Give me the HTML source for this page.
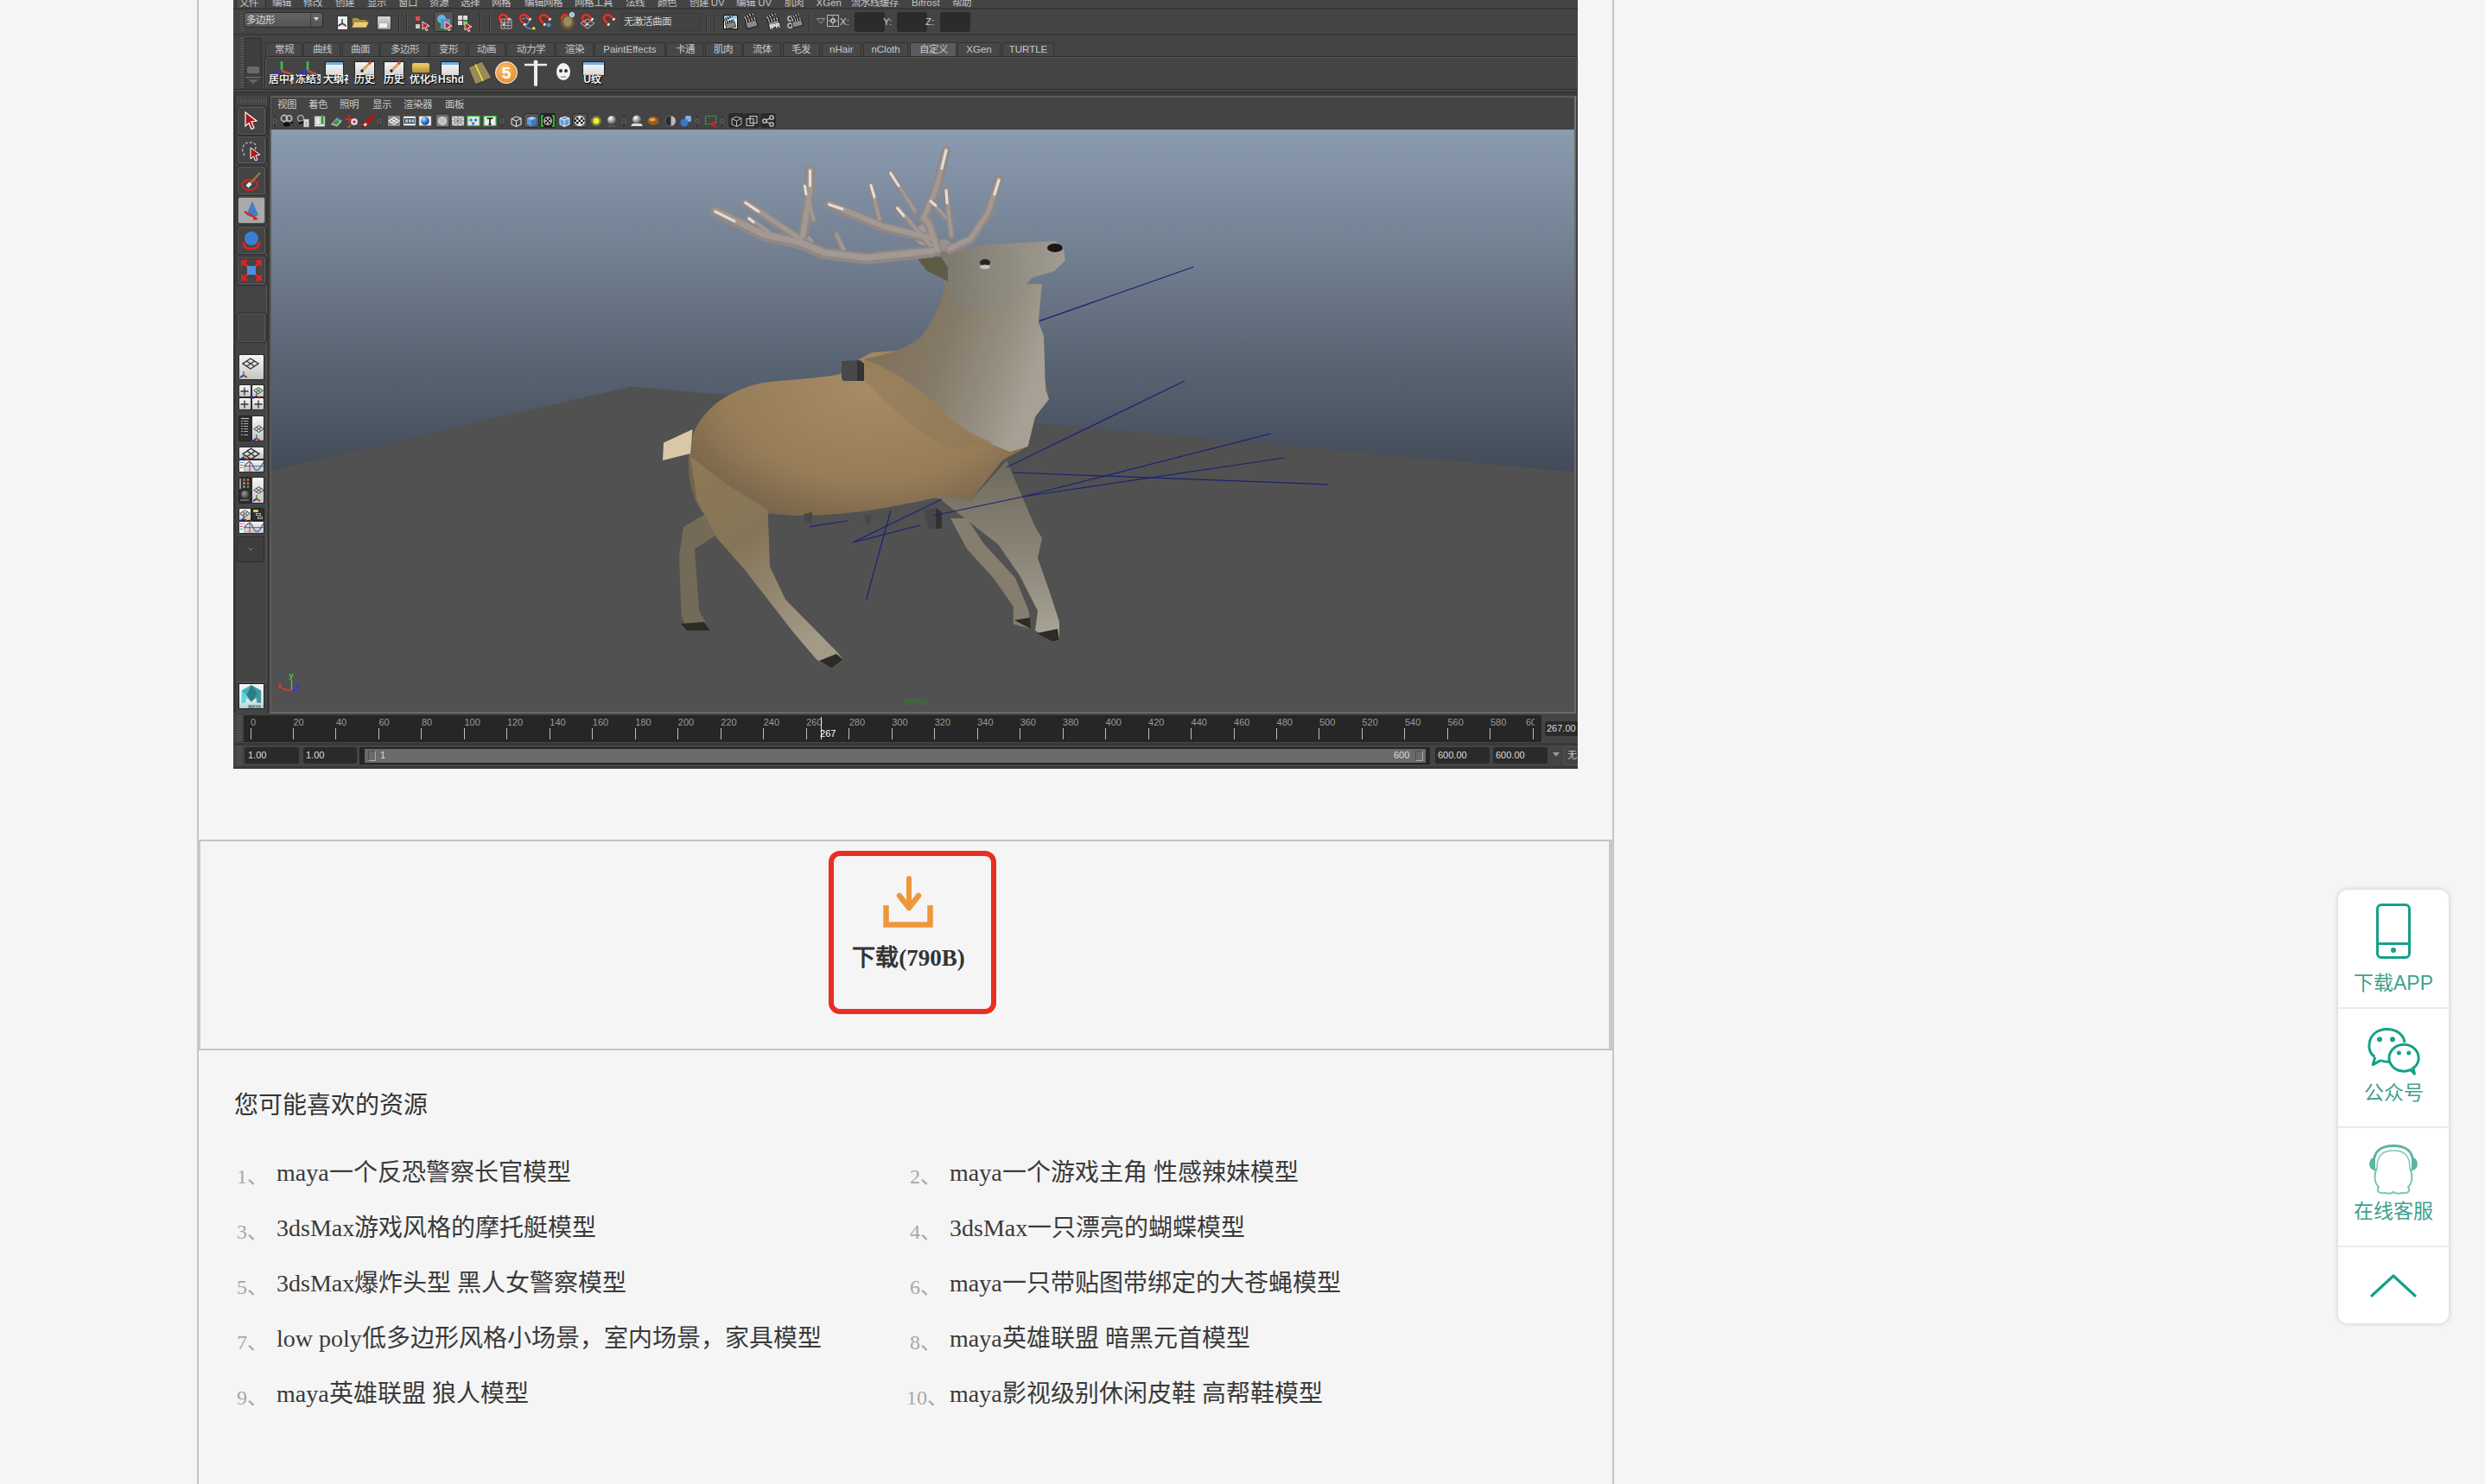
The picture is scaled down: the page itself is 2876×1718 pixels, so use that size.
<!DOCTYPE html>
<html lang="zh-CN"><head><meta charset="utf-8">
<style>
html,body{margin:0;padding:0;width:2876px;height:1718px;overflow:hidden;background:#f5f5f5;font-family:"Liberation Serif",serif;}
.a{position:absolute;}
#vl{left:228px;top:0;width:2px;height:1718px;background:#c6c6c6;}
#vr{left:1866px;top:0;width:2px;height:1718px;background:#c6c6c6;}
#dl{left:228px;top:972px;width:1640px;height:2px;background:#c4c4c4;}
#dlb{left:228px;top:1214px;width:1640px;height:2px;background:#c4c4c4;}
#dbox{left:230px;top:974px;width:1636px;height:240px;border-left:2px solid #c8c8c8;border-right:4px solid #c8c8c8;box-sizing:border-box;}
#red{left:959px;top:985px;width:194px;height:189px;border:6px solid #ea2f22;border-radius:13px;box-sizing:border-box;}
#dltxt{left:939px;top:1093px;width:225px;text-align:center;font-size:27px;font-weight:bold;color:#333;line-height:32px;white-space:nowrap;}
#maya{left:270px;top:0;width:1556px;height:890px;background:#444;overflow:hidden;}
h3{margin:0;}
.mt{position:absolute;font-family:"Liberation Sans",sans-serif;font-size:11.5px;line-height:13px;white-space:nowrap;}
.hd{left:271px;top:1262px;font-size:28px;color:#333;line-height:36px;white-space:nowrap;}
.li{font-size:28px;color:#3a3a3a;line-height:36px;white-space:nowrap;}
.nm{font-size:24px;color:#a8a8a8;line-height:36px;white-space:nowrap;}
#side{left:2706px;top:1030px;width:128px;height:502px;background:#fff;border-radius:11px;box-shadow:0 0 6px rgba(0,0,0,0.18);font-family:"Liberation Sans",sans-serif;color:#3f9e8a;}
.sdiv{position:absolute;left:0;width:128px;height:2px;background:#ebebeb;}
.stx{position:absolute;left:0;width:128px;text-align:center;font-size:23px;line-height:26px;color:#41a08c;}
</style></head><body>
<div class="a" id="vl"></div>
<div class="a" id="vr"></div>

<div class="a" id="maya">
<div style="position:absolute;left:0px;top:0px;width:1556px;height:10px;background:#444"></div>
<div style="position:absolute;left:3px;top:-2px;width:33px;height:11px;background:#4b4b4b;border:1px solid #2f2f2f;border-radius:2px"></div>
<div class="mt" style="left:7px;top:-3.5px;color:#c4c4c4">文件</div>
<div class="mt" style="left:44.7px;top:-3.5px;color:#c4c4c4">编辑</div>
<div class="mt" style="left:81px;top:-3.5px;color:#c4c4c4">修改</div>
<div class="mt" style="left:118px;top:-3.5px;color:#c4c4c4">创建</div>
<div class="mt" style="left:154.5px;top:-3.5px;color:#c4c4c4">显示</div>
<div class="mt" style="left:191px;top:-3.5px;color:#c4c4c4">窗口</div>
<div class="mt" style="left:227px;top:-3.5px;color:#c4c4c4">资源</div>
<div class="mt" style="left:263px;top:-3.5px;color:#c4c4c4">选择</div>
<div class="mt" style="left:299px;top:-3.5px;color:#c4c4c4">网格</div>
<div class="mt" style="left:337px;top:-3.5px;color:#c4c4c4">编辑网格</div>
<div class="mt" style="left:395px;top:-3.5px;color:#c4c4c4">网格工具</div>
<div class="mt" style="left:454px;top:-3.5px;color:#c4c4c4">法线</div>
<div class="mt" style="left:491px;top:-3.5px;color:#c4c4c4">颜色</div>
<div class="mt" style="left:527.5px;top:-3.5px;color:#c4c4c4">创建 UV</div>
<div class="mt" style="left:582px;top:-3.5px;color:#c4c4c4">编辑 UV</div>
<div class="mt" style="left:638px;top:-3.5px;color:#c4c4c4">肌肉</div>
<div class="mt" style="left:674.6px;top:-3.5px;color:#c4c4c4">XGen</div>
<div class="mt" style="left:715px;top:-3.5px;color:#c4c4c4">流水线缓存</div>
<div class="mt" style="left:785px;top:-3.5px;color:#c4c4c4">Bifrost</div>
<div class="mt" style="left:831.5px;top:-3.5px;color:#c4c4c4">帮助</div>
<div style="position:absolute;left:0px;top:9px;width:1556px;height:2px;background:#363636"></div>
<div style="position:absolute;left:0px;top:11px;width:1556px;height:28px;background:#444"></div>
<div style="position:absolute;left:8px;top:14px;width:5px;height:24px;background:repeating-linear-gradient(#5a5a5a 0 1px,transparent 1px 3px)"></div>
<div style="position:absolute;left:11.8px;top:13.6px;width:92px;height:18px;box-sizing:border-box;background:linear-gradient(#646464,#545454);border:1px solid #2c2c2c;border-radius:4px"></div>
<div style="position:absolute;left:89px;top:14.5px;width:1px;height:16px;background:#3a3a3a"></div>
<div style="position:absolute;left:93px;top:20px;width:0;height:0;border-left:3.5px solid transparent;border-right:3.5px solid transparent;border-top:4px solid #e0e0e0"></div>
<div class="mt" style="left:15.4px;top:17px;color:#dcdcdc">多边形</div>
<div style="position:absolute;left:120px;top:17.5px;width:11px;height:15px;background:#eee;border:1px solid #333"></div>
<svg style="position:absolute;left:120px;top:21px" width="12" height="11"><path d="M6 1V6 M6 6 L1.5 9 M6 6 L10.5 9" stroke="#22a" stroke-width="1.6"/><path d="M6 1V6" stroke="#2a2" stroke-width="1.6"/><path d="M6 6 L10.5 9" stroke="#d22" stroke-width="1.6"/></svg>
<svg style="position:absolute;left:136px;top:18px" width="22" height="16"><path d="M2 3 H8 L10 5 H18 V14 H2Z" fill="#b8923a"/><path d="M1 14 L4 7 H21 L18 14Z" fill="#e8cc78" stroke="#6a5420" stroke-width="0.7"/></svg>
<div style="position:absolute;left:166px;top:18px;width:15px;height:15px;background:linear-gradient(#d8d8d8,#9a9a9a);border-radius:2px;border:1px solid #333"></div>
<div style="position:absolute;left:169px;top:27px;width:9px;height:5px;background:#f0f0f0"></div>
<div style="position:absolute;left:191px;top:15px;width:1px;height:22px;background:#2e2e2e;box-shadow:1px 0 0 #555"></div>
<div style="position:absolute;left:200px;top:15px;width:1px;height:22px;background:#2e2e2e;box-shadow:1px 0 0 #555"></div>
<div style="position:absolute;left:211px;top:19px;width:5px;height:5px;background:#e24a4a"></div>
<div style="position:absolute;left:211px;top:28px;width:5px;height:5px;background:#ccc"></div>
<svg style="position:absolute;left:218px;top:24px" width="10" height="12"><path d="M1 1 L9 6 L5 7 L7 11 L5 11.5 L3.5 8 L1 10Z" fill="#c22" stroke="#fff" stroke-width="0.8"/></svg>
<div style="position:absolute;left:232px;top:13px;width:23px;height:24px;background:#555;border:1px solid #2e2e2e;border-radius:3px;box-sizing:border-box"></div>
<div style="position:absolute;left:236px;top:17px;width:10px;height:10px;background:#6ab0e0;border-radius:50%"></div>
<div style="position:absolute;left:240px;top:22px;width:11px;height:11px;background:#5590d8;border:1.5px solid #3c3;box-sizing:border-box"></div>
<svg style="position:absolute;left:244px;top:24px" width="10" height="12"><path d="M1 1 L9 6 L5 7 L7 11 L5 11.5 L3.5 8 L1 10Z" fill="#c22" stroke="#fff" stroke-width="0.8"/></svg>
<div style="position:absolute;left:260px;top:18px;width:5px;height:5px;background:#ddd"></div>
<div style="position:absolute;left:266px;top:18px;width:5px;height:5px;background:#ddd"></div>
<div style="position:absolute;left:260px;top:24px;width:5px;height:5px;background:#ddd"></div>
<div style="position:absolute;left:266px;top:24px;width:5px;height:5px;background:#3c3"></div>
<svg style="position:absolute;left:267px;top:25px" width="10" height="12"><path d="M1 1 L9 6 L5 7 L7 11 L5 11.5 L3.5 8 L1 10Z" fill="#c22" stroke="#fff" stroke-width="0.8"/></svg>
<div style="position:absolute;left:285px;top:15px;width:1px;height:22px;background:#2e2e2e;box-shadow:1px 0 0 #555"></div>
<div style="position:absolute;left:296px;top:15px;width:1px;height:22px;background:#2e2e2e;box-shadow:1px 0 0 #555"></div>
<svg style="position:absolute;left:303.5px;top:12.5px" width="19" height="19" viewBox="0 0 22 22"><g transform="rotate(-45 11 11)"><path d="M6 16 V9 A5 5 0 0 1 16 9 V16" stroke="#7a1a1a" stroke-width="4.6" fill="none"/><path d="M6 16 V9 A5 5 0 0 1 16 9 V16" stroke="#d03a30" stroke-width="3.4" fill="none"/><path d="M6 14.5 V17 M16 14.5 V17" stroke="#f4f4f4" stroke-width="3.6"/></g></svg>
<svg style="position:absolute;left:327.5px;top:12.5px" width="19" height="19" viewBox="0 0 22 22"><g transform="rotate(-45 11 11)"><path d="M6 16 V9 A5 5 0 0 1 16 9 V16" stroke="#7a1a1a" stroke-width="4.6" fill="none"/><path d="M6 16 V9 A5 5 0 0 1 16 9 V16" stroke="#d03a30" stroke-width="3.4" fill="none"/><path d="M6 14.5 V17 M16 14.5 V17" stroke="#f4f4f4" stroke-width="3.6"/></g></svg>
<svg style="position:absolute;left:350.5px;top:12.5px" width="19" height="19" viewBox="0 0 22 22"><g transform="rotate(-45 11 11)"><path d="M6 16 V9 A5 5 0 0 1 16 9 V16" stroke="#7a1a1a" stroke-width="4.6" fill="none"/><path d="M6 16 V9 A5 5 0 0 1 16 9 V16" stroke="#d03a30" stroke-width="3.4" fill="none"/><path d="M6 14.5 V17 M16 14.5 V17" stroke="#f4f4f4" stroke-width="3.6"/></g></svg>
<svg style="position:absolute;left:375.5px;top:12.5px" width="19" height="19" viewBox="0 0 22 22"><g transform="rotate(-45 11 11)"><path d="M6 16 V9 A5 5 0 0 1 16 9 V16" stroke="#7a1a1a" stroke-width="4.6" fill="none"/><path d="M6 16 V9 A5 5 0 0 1 16 9 V16" stroke="#d03a30" stroke-width="3.4" fill="none"/><path d="M6 14.5 V17 M16 14.5 V17" stroke="#f4f4f4" stroke-width="3.6"/></g></svg>
<svg style="position:absolute;left:399.5px;top:12.5px" width="19" height="19" viewBox="0 0 22 22"><g transform="rotate(-45 11 11)"><path d="M6 16 V9 A5 5 0 0 1 16 9 V16" stroke="#7a1a1a" stroke-width="4.6" fill="none"/><path d="M6 16 V9 A5 5 0 0 1 16 9 V16" stroke="#d03a30" stroke-width="3.4" fill="none"/><path d="M6 14.5 V17 M16 14.5 V17" stroke="#f4f4f4" stroke-width="3.6"/></g></svg>
<svg style="position:absolute;left:424.5px;top:12.5px" width="19" height="19" viewBox="0 0 22 22"><g transform="rotate(-45 11 11)"><path d="M6 16 V9 A5 5 0 0 1 16 9 V16" stroke="#7a1a1a" stroke-width="4.6" fill="none"/><path d="M6 16 V9 A5 5 0 0 1 16 9 V16" stroke="#d03a30" stroke-width="3.4" fill="none"/><path d="M6 14.5 V17 M16 14.5 V17" stroke="#f4f4f4" stroke-width="3.6"/></g></svg>
<svg style="position:absolute;left:309px;top:21px" width="14" height="13"><path d="M1 1H13V12H1Z M5 1V12 M9 1V12 M1 5H13 M1 8.5H13" stroke="#aaa" stroke-width="1" fill="none"/></svg>
<svg style="position:absolute;left:333px;top:20px" width="18" height="16"><path d="M1 2 C8 -1 12 4 7 8 C3 11 8 14 15 13" stroke="#6aa0d8" stroke-width="1.2" fill="none"/><rect x="13" y="11" width="3.5" height="3.5" fill="#ee3" stroke="#333" stroke-width="0.5"/></svg>
<svg style="position:absolute;left:362px;top:26px" width="6" height="6"><circle cx="3" cy="3" r="2.5" fill="#4a88d0"/></svg>
<svg style="position:absolute;left:377px;top:13px" width="20" height="22"><ellipse cx="10" cy="13" rx="8" ry="8.5" fill="#6a5a38"/><ellipse cx="10" cy="12" rx="5" ry="6" fill="#9a8a60"/><circle cx="15" cy="4" r="2.6" fill="#8ac0f0" stroke="#fff" stroke-width="0.8"/></svg>
<svg style="position:absolute;left:401px;top:21px" width="18" height="13"><path d="M9 1 L17 6 L9 12 L1 6Z M5 3.5 L13 9 M13 3.5 L5 9" stroke="#bbb" stroke-width="1" fill="none"/></svg>
<div style="position:absolute;left:449px;top:14.5px;width:92px;height:21.5px;box-sizing:border-box;background:#434343;border:1px solid #3a3a3a;border-radius:3px"></div>
<div class="mt" style="left:452px;top:19px;color:#d8d8d8">无激活曲面</div>
<div style="position:absolute;left:547px;top:15px;width:1px;height:22px;background:#2e2e2e;box-shadow:1px 0 0 #555"></div>
<div style="position:absolute;left:556.5px;top:15px;width:1px;height:22px;background:#2e2e2e;box-shadow:1px 0 0 #555"></div>
<svg style="position:absolute;left:566.5px;top:17px" width="17" height="17" viewBox="0 0 17 17"><rect x="0.5" y="0.5" width="16" height="16" fill="#eee" stroke="#111"/><rect x="1" y="1" width="15" height="3.5" fill="#8ac4f0"/><g transform="translate(1,2) scale(0.9)"><g transform="rotate(-14 8 10)"><rect x="2" y="8" width="12" height="7" fill="#8a8a8a" stroke="#111" stroke-width="0.8"/><rect x="2" y="5" width="12" height="3" fill="#111"/><path d="M3.5 5 V8 M6.5 5 V8 M9.5 5 V8 M12.5 5 V8" stroke="#ddd" stroke-width="1.2"/><g transform="rotate(-18 2 5)"><rect x="2" y="2" width="12" height="3" fill="#111"/><path d="M3.5 2 V5 M6.5 2 V5 M9.5 2 V5 M12.5 2 V5" stroke="#ddd" stroke-width="1.2"/></g></g></g></svg>
<svg style="position:absolute;left:591px;top:16px" width="17" height="18" viewBox="0 0 16 17"><g transform="rotate(-14 8 10)"><rect x="2" y="8" width="12" height="7" fill="#8a8a8a" stroke="#111" stroke-width="0.8"/><rect x="2" y="5" width="12" height="3" fill="#111"/><path d="M3.5 5 V8 M6.5 5 V8 M9.5 5 V8 M12.5 5 V8" stroke="#ddd" stroke-width="1.2"/><g transform="rotate(-18 2 5)"><rect x="2" y="2" width="12" height="3" fill="#111"/><path d="M3.5 2 V5 M6.5 2 V5 M9.5 2 V5 M12.5 2 V5" stroke="#ddd" stroke-width="1.2"/></g></g></svg>
<svg style="position:absolute;left:617px;top:16px" width="17" height="18" viewBox="0 0 16 17"><g transform="rotate(-14 8 10)"><rect x="2" y="8" width="12" height="7" fill="#8a8a8a" stroke="#111" stroke-width="0.8"/><rect x="2" y="5" width="12" height="3" fill="#111"/><path d="M3.5 5 V8 M6.5 5 V8 M9.5 5 V8 M12.5 5 V8" stroke="#ddd" stroke-width="1.2"/><g transform="rotate(-18 2 5)"><rect x="2" y="2" width="12" height="3" fill="#111"/><path d="M3.5 2 V5 M6.5 2 V5 M9.5 2 V5 M12.5 2 V5" stroke="#ddd" stroke-width="1.2"/></g></g><text x="3" y="16" font-size="7" font-weight="bold" fill="#fff" font-family="Liberation Sans" transform="rotate(-10 8 12)">IPR</text></svg>
<svg style="position:absolute;left:641px;top:16px" width="19" height="18" viewBox="0 0 19 17"><circle cx="3.5" cy="5" r="2.6" fill="none" stroke="#bbb" stroke-width="1.5"/><circle cx="3.5" cy="13" r="2.6" fill="none" stroke="#bbb" stroke-width="1.5"/><g transform="translate(4,0) scale(0.95)"><g transform="rotate(-14 8 10)"><rect x="2" y="8" width="12" height="7" fill="#8a8a8a" stroke="#111" stroke-width="0.8"/><rect x="2" y="5" width="12" height="3" fill="#111"/><path d="M3.5 5 V8 M6.5 5 V8 M9.5 5 V8 M12.5 5 V8" stroke="#ddd" stroke-width="1.2"/><g transform="rotate(-18 2 5)"><rect x="2" y="2" width="12" height="3" fill="#111"/><path d="M3.5 2 V5 M6.5 2 V5 M9.5 2 V5 M12.5 2 V5" stroke="#ddd" stroke-width="1.2"/></g></g></g></svg>
<div style="position:absolute;left:666px;top:15px;width:1px;height:22px;background:#2e2e2e;box-shadow:1px 0 0 #555"></div>
<svg style="position:absolute;left:675px;top:21px" width="10" height="7"><path d="M0.5 0.5 H9.5 L5 6Z" fill="none" stroke="#999"/></svg>
<svg style="position:absolute;left:686.5px;top:17px" width="14" height="14"><rect x="0.5" y="0.5" width="13" height="13" fill="none" stroke="#bbb"/><path d="M7 0.5 V13.5 M0.5 7 H13.5" stroke="#999"/><circle cx="7" cy="7" r="2.2" fill="#444" stroke="#ddd" stroke-width="1.2"/></svg>
<div class="mt" style="left:702px;top:19px;color:#ccc">X:</div>
<div style="position:absolute;left:719px;top:14px;width:35px;height:23px;background:#2b2b2b;border-radius:3px"></div>
<div class="mt" style="left:752px;top:19px;color:#ccc">Y:</div>
<div style="position:absolute;left:768px;top:14px;width:35px;height:23px;background:#2b2b2b;border-radius:3px"></div>
<div class="mt" style="left:801px;top:19px;color:#ccc">Z:</div>
<div style="position:absolute;left:818px;top:14px;width:35px;height:23px;background:#2b2b2b;border-radius:3px"></div>
<div style="position:absolute;left:0px;top:39px;width:1556px;height:2px;background:#393939"></div>
<div style="position:absolute;left:0px;top:41px;width:1556px;height:70px;background:#444"></div>
<div style="position:absolute;left:8px;top:44px;width:5px;height:62px;background:repeating-linear-gradient(#5a5a5a 0 1px,transparent 1px 3px)"></div>
<div style="position:absolute;left:13px;top:44px;width:20px;height:62px;box-sizing:border-box;background:#3f3f3f;border:1px solid #2f2f2f"></div>
<div style="position:absolute;left:16px;top:77px;width:14px;height:8px;background:#6a6a6a;border-radius:2px"></div>
<div style="position:absolute;left:14px;top:89px;width:18px;height:1px;background:#777"></div>
<div style="position:absolute;left:17px;top:92px;width:0;height:0;border-left:6px solid transparent;border-right:6px solid transparent;border-top:5px solid #666"></div>
<div style="position:absolute;left:37px;top:48.5px;width:43px;height:17px;box-sizing:border-box;background:#474747;border:1px solid #333;border-bottom:none;border-radius:2px 2px 0 0"></div>
<div class="mt" style="left:37px;top:51px;width:43px;text-align:center;color:#c8c8c8">常规</div>
<div style="position:absolute;left:81px;top:48.5px;width:43px;height:17px;box-sizing:border-box;background:#474747;border:1px solid #333;border-bottom:none;border-radius:2px 2px 0 0"></div>
<div class="mt" style="left:81px;top:51px;width:43px;text-align:center;color:#c8c8c8">曲线</div>
<div style="position:absolute;left:125.5px;top:48.5px;width:43.5px;height:17px;box-sizing:border-box;background:#474747;border:1px solid #333;border-bottom:none;border-radius:2px 2px 0 0"></div>
<div class="mt" style="left:125.5px;top:51px;width:43.5px;text-align:center;color:#c8c8c8">曲面</div>
<div style="position:absolute;left:170px;top:48.5px;width:56px;height:17px;box-sizing:border-box;background:#474747;border:1px solid #333;border-bottom:none;border-radius:2px 2px 0 0"></div>
<div class="mt" style="left:170px;top:51px;width:56px;text-align:center;color:#c8c8c8">多边形</div>
<div style="position:absolute;left:227px;top:48.5px;width:43px;height:17px;box-sizing:border-box;background:#474747;border:1px solid #333;border-bottom:none;border-radius:2px 2px 0 0"></div>
<div class="mt" style="left:227px;top:51px;width:43px;text-align:center;color:#c8c8c8">变形</div>
<div style="position:absolute;left:271.6px;top:48.5px;width:43.39999999999998px;height:17px;box-sizing:border-box;background:#474747;border:1px solid #333;border-bottom:none;border-radius:2px 2px 0 0"></div>
<div class="mt" style="left:271.6px;top:51px;width:43.39999999999998px;text-align:center;color:#c8c8c8">动画</div>
<div style="position:absolute;left:316px;top:48.5px;width:56px;height:17px;box-sizing:border-box;background:#474747;border:1px solid #333;border-bottom:none;border-radius:2px 2px 0 0"></div>
<div class="mt" style="left:316px;top:51px;width:56px;text-align:center;color:#c8c8c8">动力学</div>
<div style="position:absolute;left:373px;top:48.5px;width:43.5px;height:17px;box-sizing:border-box;background:#474747;border:1px solid #333;border-bottom:none;border-radius:2px 2px 0 0"></div>
<div class="mt" style="left:373px;top:51px;width:43.5px;text-align:center;color:#c8c8c8">渲染</div>
<div style="position:absolute;left:417.7px;top:48.5px;width:82.30000000000001px;height:17px;box-sizing:border-box;background:#474747;border:1px solid #333;border-bottom:none;border-radius:2px 2px 0 0"></div>
<div class="mt" style="left:417.7px;top:51px;width:82.30000000000001px;text-align:center;color:#c8c8c8">PaintEffects</div>
<div style="position:absolute;left:501px;top:48.5px;width:43px;height:17px;box-sizing:border-box;background:#474747;border:1px solid #333;border-bottom:none;border-radius:2px 2px 0 0"></div>
<div class="mt" style="left:501px;top:51px;width:43px;text-align:center;color:#c8c8c8">卡通</div>
<div style="position:absolute;left:545.6px;top:48.5px;width:43.39999999999998px;height:17px;box-sizing:border-box;background:#474747;border:1px solid #333;border-bottom:none;border-radius:2px 2px 0 0"></div>
<div class="mt" style="left:545.6px;top:51px;width:43.39999999999998px;text-align:center;color:#c8c8c8">肌肉</div>
<div style="position:absolute;left:590px;top:48.5px;width:44px;height:17px;box-sizing:border-box;background:#474747;border:1px solid #333;border-bottom:none;border-radius:2px 2px 0 0"></div>
<div class="mt" style="left:590px;top:51px;width:44px;text-align:center;color:#c8c8c8">流体</div>
<div style="position:absolute;left:636px;top:48.5px;width:42.60000000000002px;height:17px;box-sizing:border-box;background:#474747;border:1px solid #333;border-bottom:none;border-radius:2px 2px 0 0"></div>
<div class="mt" style="left:636px;top:51px;width:42.60000000000002px;text-align:center;color:#c8c8c8">毛发</div>
<div style="position:absolute;left:680.6px;top:48.5px;width:46.39999999999998px;height:17px;box-sizing:border-box;background:#474747;border:1px solid #333;border-bottom:none;border-radius:2px 2px 0 0"></div>
<div class="mt" style="left:680.6px;top:51px;width:46.39999999999998px;text-align:center;color:#c8c8c8">nHair</div>
<div style="position:absolute;left:729px;top:48.5px;width:52px;height:17px;box-sizing:border-box;background:#474747;border:1px solid #333;border-bottom:none;border-radius:2px 2px 0 0"></div>
<div class="mt" style="left:729px;top:51px;width:52px;text-align:center;color:#c8c8c8">nCloth</div>
<div style="position:absolute;left:783px;top:48.5px;width:54px;height:17px;box-sizing:border-box;background:#5b5b5b;border:1px solid #333;border-bottom:none;border-radius:2px 2px 0 0"></div>
<div class="mt" style="left:783px;top:51px;width:54px;text-align:center;color:#c8c8c8">自定义</div>
<div style="position:absolute;left:838px;top:48.5px;width:50px;height:17px;box-sizing:border-box;background:#474747;border:1px solid #333;border-bottom:none;border-radius:2px 2px 0 0"></div>
<div class="mt" style="left:838px;top:51px;width:50px;text-align:center;color:#c8c8c8">XGen</div>
<div style="position:absolute;left:890px;top:48.5px;width:60px;height:17px;box-sizing:border-box;background:#474747;border:1px solid #333;border-bottom:none;border-radius:2px 2px 0 0"></div>
<div class="mt" style="left:890px;top:51px;width:60px;text-align:center;color:#c8c8c8">TURTLE</div>
<div style="position:absolute;left:36px;top:65px;width:1520px;height:41px;box-sizing:border-box;background:#444;border:1px solid #2e2e2e;border-radius:3px;box-shadow:inset 0 0 0 1px #555"></div>
<svg style="position:absolute;left:41.69999999999999px;top:70px" width="28" height="16"><path d="M14 1V12" stroke="#3c3" stroke-width="2.5"/><path d="M14 12 L3 16" stroke="#33c" stroke-width="2.5"/><path d="M14 12 L25 16" stroke="#c44" stroke-width="2.5"/></svg>
<svg style="position:absolute;left:72.39999999999998px;top:70px" width="28" height="16"><path d="M14 1V12" stroke="#3c3" stroke-width="2.5"/><path d="M14 12 L3 16" stroke="#33c" stroke-width="2.5"/><path d="M14 12 L25 16" stroke="#c44" stroke-width="2.5"/></svg>
<div class="mt" style="left:41px;top:85.5px;width:29px;text-align:center;color:#f0f0f0;font-weight:bold;font-size:12px;text-shadow:0 0 2px #000,1px 1px 1px #000;overflow:hidden;white-space:nowrap">居中枢</div>
<div class="mt" style="left:72px;top:85.5px;width:29px;text-align:center;color:#f0f0f0;font-weight:bold;font-size:12px;text-shadow:0 0 2px #000,1px 1px 1px #000;overflow:hidden;white-space:nowrap">冻结变</div>
<div style="position:absolute;left:106px;top:71px;width:20px;height:15px;background:linear-gradient(#70b0e8 0 3px,#f2f2f2 3px,#d8d8d8);border:1px solid #222"></div>
<div class="mt" style="left:104px;top:85.5px;width:29px;text-align:center;color:#f0f0f0;font-weight:bold;font-size:12px;text-shadow:0 0 2px #000,1px 1px 1px #000;overflow:hidden;white-space:nowrap">大纲视</div>
<div style="position:absolute;left:140px;top:71px;width:22px;height:15px;background:linear-gradient(#f5f5f5,#d0d0d0);border:1px solid #222"></div>
<svg style="position:absolute;left:146px;top:70px" width="16" height="14"><path d="M2 13 L13 2" stroke="#e0a050" stroke-width="3"/><path d="M2 13 L4 11" stroke="#222" stroke-width="3"/><path d="M11 4 L13 2" stroke="#d44" stroke-width="3"/></svg>
<div style="position:absolute;left:174px;top:71px;width:22px;height:15px;background:linear-gradient(#f5f5f5,#d0d0d0);border:1px solid #222"></div>
<svg style="position:absolute;left:180px;top:70px" width="16" height="14"><path d="M2 13 L13 2" stroke="#e0a050" stroke-width="3"/><path d="M2 13 L4 11" stroke="#222" stroke-width="3"/><path d="M11 4 L13 2" stroke="#d44" stroke-width="3"/></svg>
<div class="mt" style="left:137px;top:85.5px;width:29px;text-align:center;color:#f0f0f0;font-weight:bold;font-size:12px;text-shadow:0 0 2px #000,1px 1px 1px #000;overflow:hidden;white-space:nowrap">历史</div>
<div class="mt" style="left:171px;top:85.5px;width:29px;text-align:center;color:#f0f0f0;font-weight:bold;font-size:12px;text-shadow:0 0 2px #000,1px 1px 1px #000;overflow:hidden;white-space:nowrap">历史</div>
<div style="position:absolute;left:207px;top:73px;width:20px;height:11px;background:linear-gradient(#f0d070,#b89030);border-radius:2px"></div>
<div class="mt" style="left:204px;top:85.5px;width:31px;text-align:center;color:#f0f0f0;font-weight:bold;font-size:12px;text-shadow:0 0 2px #000,1px 1px 1px #000;overflow:hidden;white-space:nowrap">优化场</div>
<div style="position:absolute;left:240px;top:71px;width:20px;height:15px;background:linear-gradient(#70b0e8 0 3px,#f2f2f2 3px,#d8d8d8);border:1px solid #222"></div>
<div class="mt" style="left:237px;top:85.5px;width:29px;text-align:center;color:#f0f0f0;font-weight:bold;font-size:12px;text-shadow:0 0 2px #000,1px 1px 1px #000;overflow:hidden;white-space:nowrap">Hshd</div>
<svg style="position:absolute;left:270px;top:70px" width="30" height="29"><path d="M2 8 L18 1 L29 20 L10 28Z" fill="#9a8a5a" stroke="#333"/><path d="M10 4.5 L19 24" stroke="#ee3" stroke-width="1.5"/></svg>
<div style="position:absolute;left:303px;top:71px;width:26px;height:26px;border-radius:50%;background:radial-gradient(circle at 40% 35%,#f8c070,#e08020);border:1px solid #fff;box-sizing:border-box;color:#fff;font:bold 19px/25px 'Liberation Sans',sans-serif;text-align:center">5</div>
<svg style="position:absolute;left:335px;top:69px" width="30" height="31"><path d="M2 6 H28" stroke="#eee" stroke-width="2.5"/><path d="M15 3 V29" stroke="#eee" stroke-width="4"/><circle cx="15" cy="3" r="2.5" fill="#eee"/><path d="M13 29 H17" stroke="#eee" stroke-width="3"/></svg>
<svg style="position:absolute;left:373px;top:73px" width="18" height="22"><ellipse cx="9" cy="10" rx="8" ry="10" fill="#f2f2f2"/><circle cx="6" cy="9" r="2" fill="#333"/><circle cx="12" cy="9" r="2" fill="#333"/><path d="M6 16 H12" stroke="#666"/></svg>
<div style="position:absolute;left:404px;top:71px;width:24px;height:15px;background:linear-gradient(#70b0e8 0 3px,#f2f2f2 3px,#d8d8d8);border:1px solid #222"></div>
<div class="mt" style="left:401px;top:85.5px;width:29px;text-align:center;color:#f0f0f0;font-weight:bold;font-size:12px;text-shadow:0 0 2px #000,1px 1px 1px #000;overflow:hidden;white-space:nowrap">U纹</div>
<div style="position:absolute;left:0px;top:102.5px;width:1556px;height:1.5px;background:#2a2a2a"></div>
<div style="position:absolute;left:0px;top:104px;width:1556px;height:2px;background:#4a4a4a"></div>
<div style="position:absolute;left:0px;top:106px;width:1556px;height:1px;background:#2a2a2a"></div>
<div style="position:absolute;left:0px;top:107px;width:1556px;height:4px;background:#3c3c3c"></div>
<div style="position:absolute;left:0px;top:111px;width:43px;height:714px;background:#444"></div>
<div style="position:absolute;left:0px;top:111px;width:3.4px;height:714px;background:#363636"></div>
<div style="position:absolute;left:37.8px;top:111px;width:1.2px;height:678px;background:#575757"></div>
<div style="position:absolute;left:39px;top:111px;width:2.5px;height:714px;background:#383838"></div>
<div style="position:absolute;left:3.4px;top:788.5px;width:35.6px;height:1.2px;background:#575757"></div>
<div style="position:absolute;left:5px;top:115px;width:32px;height:4px;background:repeating-linear-gradient(90deg,#5a5a5a 0 1px,transparent 1px 3px)"></div>
<div style="position:absolute;left:3.5px;top:122.2px;width:35px;height:34.89999999999999px;box-sizing:border-box;border:1.5px solid #2e2e2e;border-radius:3px;background:#444"></div>
<div style="position:absolute;left:5px;top:123.7px;width:32px;height:31.89999999999999px;box-sizing:border-box;border:1px solid #575757;border-radius:3px;background:#444"></div>
<div style="position:absolute;left:3.5px;top:156.5px;width:35px;height:34.400000000000006px;box-sizing:border-box;border:1.5px solid #2e2e2e;border-radius:3px;background:#444"></div>
<div style="position:absolute;left:5px;top:158px;width:32px;height:31.400000000000006px;box-sizing:border-box;border:1px solid #575757;border-radius:3px;background:#444"></div>
<div style="position:absolute;left:3.5px;top:191.5px;width:35px;height:35px;box-sizing:border-box;border:1.5px solid #2e2e2e;border-radius:3px;background:#444"></div>
<div style="position:absolute;left:5px;top:193px;width:32px;height:32px;box-sizing:border-box;border:1px solid #575757;border-radius:3px;background:#444"></div>
<div style="position:absolute;left:3.5px;top:226.3px;width:35px;height:34.19999999999999px;box-sizing:border-box;border:1.5px solid #2e2e2e;border-radius:3px;background:#444"></div>
<div style="position:absolute;left:5px;top:227.8px;width:32px;height:31.19999999999999px;box-sizing:border-box;border:1px solid #575757;border-radius:3px;background:#a9a9a9"></div>
<div style="position:absolute;left:3.5px;top:261.2px;width:35px;height:34.30000000000001px;box-sizing:border-box;border:1.5px solid #2e2e2e;border-radius:3px;background:#444"></div>
<div style="position:absolute;left:5px;top:262.7px;width:32px;height:31.30000000000001px;box-sizing:border-box;border:1px solid #575757;border-radius:3px;background:#444"></div>
<div style="position:absolute;left:3.5px;top:295.5px;width:35px;height:35px;box-sizing:border-box;border:1.5px solid #2e2e2e;border-radius:3px;background:#444"></div>
<div style="position:absolute;left:5px;top:297px;width:32px;height:32px;box-sizing:border-box;border:1px solid #575757;border-radius:3px;background:#444"></div>
<div style="position:absolute;left:3.5px;top:361.5px;width:35px;height:35.69999999999999px;box-sizing:border-box;border:1.5px solid #2e2e2e;border-radius:3px;background:#444"></div>
<div style="position:absolute;left:5px;top:363px;width:32px;height:32.69999999999999px;box-sizing:border-box;border:1px solid #575757;border-radius:3px;background:#444"></div>
<svg style="position:absolute;left:12px;top:129px" width="18" height="22"><path d="M2 1 L15 11 L9 12 L12 19 L9 20.5 L6 13.5 L2 17Z" fill="#b01818" stroke="#fff" stroke-width="1.2"/></svg>
<svg style="position:absolute;left:8px;top:162px" width="26" height="24"><path d="M5 18 C0 10 4 2 12 3 C20 3 19 11 15 14" stroke="#bbb" stroke-width="1.3" fill="none" stroke-dasharray="3 2"/><path d="M12 9 L23 17 L18 18 L20 23 L17.5 24 L15.5 19 L12 22Z" fill="#b01818" stroke="#fff" stroke-width="1"/></svg>
<svg style="position:absolute;left:8px;top:197px" width="26" height="26"><ellipse cx="11" cy="17" rx="9" ry="6" stroke="#d22" stroke-width="2" fill="none"/><path d="M10 17 L23 3" stroke="#a87040" stroke-width="2.5"/><path d="M8 19 L12 15" stroke="#eee" stroke-width="4"/></svg>
<svg style="position:absolute;left:8px;top:231px" width="26" height="26"><path d="M14 2 L21 18 Q14 21 7 18Z" fill="#3d7fc0"/><path d="M5 14 L19 22" stroke="#d22" stroke-width="2.5"/><path d="M16 19 L21 23 L15 24Z" fill="#d22"/></svg>
<svg style="position:absolute;left:8px;top:266px" width="26" height="26"><circle cx="13" cy="10" r="8" fill="#3a80d0"/><path d="M4 14 Q3 22 13 22 Q22 22 22 14" stroke="#d22" stroke-width="3" fill="none"/></svg>
<svg style="position:absolute;left:8px;top:300px" width="26" height="26"><path d="M2 2 L9 9 M24 2 L17 9 M2 24 L9 17 M24 24 L17 17" stroke="#d22" stroke-width="3"/><path d="M2 2 L7 2 L2 7Z M24 2 L19 2 L24 7Z M2 24 L7 24 L2 19Z M24 24 L19 24 L24 19Z" fill="#d22" stroke="#d22" stroke-width="2"/><rect x="8" y="8" width="10" height="10" fill="#4a90e0"/></svg>
<div style="position:absolute;left:5.6px;top:409.6px;width:30.4px;height:30.4px;box-sizing:border-box;border-radius:2px;background:linear-gradient(#f6f6f6,#c4c4c4);border:1px solid #2a2a2a"></div>
<svg style="position:absolute;left:9.5px;top:414px" width="20" height="14.0" viewBox="0 0 20 14"><path d="M10 1 L19 7 L10 13 L1 7Z M5.5 4 L14.5 10 M14.5 4 L5.5 10" stroke="#333" stroke-width="1.4" fill="none"/></svg>
<svg style="position:absolute;left:7px;top:429px" width="10" height="9"><path d="M5 1V5.5" stroke="#2a2" stroke-width="1.6"/><path d="M5 5.5 L1 8" stroke="#22c" stroke-width="1.6"/><path d="M5 5.5 L9 8" stroke="#c22" stroke-width="1.6"/></svg>
<div style="position:absolute;left:5.6px;top:445px;width:15px;height:15px;box-sizing:border-box;border-radius:2px;background:linear-gradient(#f6f6f6,#c4c4c4);border:1px solid #2a2a2a"></div>
<div style="position:absolute;left:21px;top:445px;width:15px;height:15px;box-sizing:border-box;border-radius:2px;background:linear-gradient(#f6f6f6,#c4c4c4);border:1px solid #2a2a2a"></div>
<div style="position:absolute;left:5.6px;top:460.4px;width:15px;height:15px;box-sizing:border-box;border-radius:2px;background:linear-gradient(#f6f6f6,#c4c4c4);border:1px solid #2a2a2a"></div>
<div style="position:absolute;left:21px;top:460.4px;width:15px;height:15px;box-sizing:border-box;border-radius:2px;background:linear-gradient(#f6f6f6,#c4c4c4);border:1px solid #2a2a2a"></div>
<svg style="position:absolute;left:8px;top:447.5px" width="10" height="10"><path d="M5 0.5V9.5 M0.5 5H9.5" stroke="#333" stroke-width="1.3"/></svg>
<svg style="position:absolute;left:22.5px;top:447.5px" width="12" height="8.399999999999999" viewBox="0 0 20 14"><path d="M10 1 L19 7 L10 13 L1 7Z M5.5 4 L14.5 10 M14.5 4 L5.5 10" stroke="#333" stroke-width="1.4" fill="none"/></svg>
<svg style="position:absolute;left:22px;top:452.5px" width="10" height="9"><path d="M5 1V5.5" stroke="#2a2" stroke-width="1.6"/><path d="M5 5.5 L1 8" stroke="#22c" stroke-width="1.6"/><path d="M5 5.5 L9 8" stroke="#c22" stroke-width="1.6"/></svg>
<svg style="position:absolute;left:8px;top:463px" width="10" height="10"><path d="M5 0.5V9.5 M0.5 5H9.5" stroke="#333" stroke-width="1.3"/></svg>
<svg style="position:absolute;left:23.5px;top:463px" width="10" height="10"><path d="M5 0.5V9.5 M0.5 5H9.5" stroke="#333" stroke-width="1.3"/></svg>
<div style="position:absolute;left:5.6px;top:480.7px;width:15px;height:30.7px;box-sizing:border-box;border-radius:2px;background:#2e2e2e;border:1px solid #222"></div>
<div style="position:absolute;left:21px;top:480.7px;width:15px;height:30.7px;box-sizing:border-box;border-radius:2px;background:linear-gradient(#f6f6f6,#c4c4c4);border:1px solid #2a2a2a"></div>
<div style="position:absolute;left:8.5px;top:483.5px;width:9px;height:1px;background:#ccc"></div>
<div style="position:absolute;left:8.5px;top:486.5px;width:2px;height:1px;background:#aaa"></div>
<div style="position:absolute;left:11.5px;top:486.5px;width:5px;height:1px;background:#aaa"></div>
<div style="position:absolute;left:8.5px;top:489.7px;width:2px;height:1px;background:#aaa"></div>
<div style="position:absolute;left:11.5px;top:489.7px;width:5px;height:1px;background:#aaa"></div>
<div style="position:absolute;left:8.5px;top:492.9px;width:2px;height:1px;background:#aaa"></div>
<div style="position:absolute;left:11.5px;top:492.9px;width:5px;height:1px;background:#aaa"></div>
<div style="position:absolute;left:8.5px;top:496.1px;width:2px;height:1px;background:#aaa"></div>
<div style="position:absolute;left:11.5px;top:496.1px;width:5px;height:1px;background:#aaa"></div>
<div style="position:absolute;left:8.5px;top:499.3px;width:2px;height:1px;background:#aaa"></div>
<div style="position:absolute;left:11.5px;top:499.3px;width:5px;height:1px;background:#aaa"></div>
<div style="position:absolute;left:8.5px;top:502.5px;width:2px;height:1px;background:#aaa"></div>
<div style="position:absolute;left:11.5px;top:502.5px;width:5px;height:1px;background:#aaa"></div>
<svg style="position:absolute;left:22.5px;top:492px" width="13.0" height="9.1" viewBox="0 0 20 14"><path d="M10 1 L19 7 L10 13 L1 7Z M5.5 4 L14.5 10 M14.5 4 L5.5 10" stroke="#333" stroke-width="1.4" fill="none"/></svg>
<svg style="position:absolute;left:22px;top:502px" width="10" height="9"><path d="M5 1V5.5" stroke="#2a2" stroke-width="1.6"/><path d="M5 5.5 L1 8" stroke="#22c" stroke-width="1.6"/><path d="M5 5.5 L9 8" stroke="#c22" stroke-width="1.6"/></svg>
<div style="position:absolute;left:5.6px;top:516.7px;width:30.4px;height:15px;box-sizing:border-box;border-radius:2px;background:linear-gradient(#f6f6f6,#c4c4c4);border:1px solid #2a2a2a"></div>
<svg style="position:absolute;left:10px;top:517.5px" width="21.0" height="14.7" viewBox="0 0 20 14"><path d="M10 1 L19 7 L10 13 L1 7Z M5.5 4 L14.5 10 M14.5 4 L5.5 10" stroke="#333" stroke-width="1.4" fill="none"/></svg>
<svg style="position:absolute;left:7px;top:523.5px" width="10" height="9"><path d="M5 1V5.5" stroke="#2a2" stroke-width="1.6"/><path d="M5 5.5 L1 8" stroke="#22c" stroke-width="1.6"/><path d="M5 5.5 L9 8" stroke="#c22" stroke-width="1.6"/></svg>
<div style="position:absolute;left:5.6px;top:531.7px;width:30.4px;height:15.3px;box-sizing:border-box;border-radius:2px;background:linear-gradient(#f6f6f6,#c4c4c4);border:1px solid #2a2a2a"></div>
<div style="position:absolute;left:6.6px;top:532.7px;width:5px;height:13.3px;background:#f4f4f4;border-right:1px solid #bbb"></div>
<div style="position:absolute;left:7.6px;top:534.7px;width:3px;height:1px;background:#48c"></div>
<div style="position:absolute;left:7.6px;top:537.7px;width:3px;height:1px;background:#d33"></div>
<div style="position:absolute;left:7.6px;top:540.7px;width:3px;height:1px;background:#3a3"></div>
<svg style="position:absolute;left:11.6px;top:531.7px" width="23.4" height="15.3"><path d="M0 7.65 H23.4" stroke="#444" stroke-width="0.8"/><path d="M1 8.65 C5 0.7650000000000001,8 0.7650000000000001,11 7.65 S17 14.535,23 3.0600000000000005" stroke="#3a6aa8" stroke-width="1.3" fill="none"/><path d="M7 0 V15.3" stroke="#d22" stroke-width="1"/></svg>
<div style="position:absolute;left:5.6px;top:552px;width:15px;height:30.5px;box-sizing:border-box;border-radius:2px;background:#2e2e2e;border:1px solid #222"></div>
<div style="position:absolute;left:21px;top:552px;width:15px;height:30.5px;box-sizing:border-box;border-radius:2px;background:linear-gradient(#f6f6f6,#c4c4c4);border:1px solid #2a2a2a"></div>
<div style="position:absolute;left:7px;top:553.5px;width:2px;height:12px;background:#999"></div>
<div style="position:absolute;left:11px;top:554px;width:2.5px;height:2.5px;border:1px solid #aaa;border-radius:50%;box-sizing:border-box"></div>
<div style="position:absolute;left:11px;top:558px;width:2.5px;height:2.5px;background:#e66;border-radius:50%"></div>
<div style="position:absolute;left:11px;top:562px;width:2.5px;height:2.5px;background:#4b4;border-radius:50%"></div>
<div style="position:absolute;left:15.5px;top:554px;width:2.5px;height:2.5px;border:1px solid #aaa;border-radius:50%;box-sizing:border-box"></div>
<div style="position:absolute;left:15.5px;top:558px;width:2.5px;height:2.5px;background:#e66;border-radius:50%"></div>
<div style="position:absolute;left:15.5px;top:562px;width:2.5px;height:2.5px;background:#4b4;border-radius:50%"></div>
<div style="position:absolute;left:8.5px;top:568px;width:9px;height:9px;border-radius:50%;background:radial-gradient(circle at 40% 35%,#999,#222)"></div>
<div style="position:absolute;left:8px;top:578px;width:10px;height:1.5px;background:#666"></div>
<svg style="position:absolute;left:22.5px;top:563px" width="13.0" height="9.1" viewBox="0 0 20 14"><path d="M10 1 L19 7 L10 13 L1 7Z M5.5 4 L14.5 10 M14.5 4 L5.5 10" stroke="#333" stroke-width="1.4" fill="none"/></svg>
<svg style="position:absolute;left:22px;top:572px" width="10" height="9"><path d="M5 1V5.5" stroke="#2a2" stroke-width="1.6"/><path d="M5 5.5 L1 8" stroke="#22c" stroke-width="1.6"/><path d="M5 5.5 L9 8" stroke="#c22" stroke-width="1.6"/></svg>
<div style="position:absolute;left:5.6px;top:587.7px;width:15px;height:15.3px;box-sizing:border-box;border-radius:2px;background:linear-gradient(#f6f6f6,#c4c4c4);border:1px solid #2a2a2a"></div>
<svg style="position:absolute;left:7px;top:589.5px" width="13.0" height="9.1" viewBox="0 0 20 14"><path d="M10 1 L19 7 L10 13 L1 7Z M5.5 4 L14.5 10 M14.5 4 L5.5 10" stroke="#333" stroke-width="1.4" fill="none"/></svg>
<svg style="position:absolute;left:7px;top:595px" width="10" height="9"><path d="M5 1V5.5" stroke="#2a2" stroke-width="1.6"/><path d="M5 5.5 L1 8" stroke="#22c" stroke-width="1.6"/><path d="M5 5.5 L9 8" stroke="#c22" stroke-width="1.6"/></svg>
<div style="position:absolute;left:21px;top:587.7px;width:15px;height:15.3px;box-sizing:border-box;border-radius:2px;background:#2e2e2e;border:1px solid #222"></div>
<div style="position:absolute;left:23px;top:590px;width:6px;height:3px;background:#d8c878;border-radius:1px"></div>
<div style="position:absolute;left:26px;top:594px;width:6px;height:2.5px;box-sizing:border-box;border:1px solid #aaa"></div>
<div style="position:absolute;left:28px;top:598px;width:6px;height:2.5px;box-sizing:border-box;border:1px solid #aaa"></div>
<div style="position:absolute;left:5.6px;top:603px;width:30.4px;height:15.4px;box-sizing:border-box;border-radius:2px;background:linear-gradient(#f6f6f6,#c4c4c4);border:1px solid #2a2a2a"></div>
<div style="position:absolute;left:6.6px;top:604px;width:5px;height:13.4px;background:#f4f4f4;border-right:1px solid #bbb"></div>
<div style="position:absolute;left:7.6px;top:606px;width:3px;height:1px;background:#48c"></div>
<div style="position:absolute;left:7.6px;top:609px;width:3px;height:1px;background:#d33"></div>
<div style="position:absolute;left:7.6px;top:612px;width:3px;height:1px;background:#3a3"></div>
<svg style="position:absolute;left:11.6px;top:603px" width="23.4" height="15.4"><path d="M0 7.7 H23.4" stroke="#444" stroke-width="0.8"/><path d="M1 8.7 C5 0.77,8 0.77,11 7.7 S17 14.629999999999999,23 3.08" stroke="#3a6aa8" stroke-width="1.3" fill="none"/><path d="M7 0 V15.4" stroke="#d22" stroke-width="1"/></svg>
<div style="position:absolute;left:4px;top:621px;width:32px;height:30px;box-sizing:border-box;border:1.5px solid #2e2e2e;border-radius:2px;background:#3e3e3e"></div>
<svg style="position:absolute;left:17px;top:634px" width="6" height="4"><path d="M0.5 0.5 L3 3 L5.5 0.5" stroke="#888" fill="none"/></svg>
<div style="position:absolute;left:5.7px;top:791px;width:30.3px;height:30px;background:linear-gradient(#f4f6f8,#dde8ec 70%,#a8d4d8);border:1px solid #222;box-sizing:border-box"></div>
<svg style="position:absolute;left:5.7px;top:791px" width="30.3" height="30" viewBox="0 0 30 30"><path d="M14.8 1.9 L3.4 8.6 L3.4 22.7 L8.1 22.7 L9.1 17 L14.8 21.4Z" fill="#5fd8dc"/><path d="M14.8 1.9 L26 8.6 L26 22.7 L21.2 22.7 L20.2 17 L14.8 21.4Z" fill="#3f9a9c"/><path d="M14.8 1.9 L8 12 L14.8 21.4 L21.5 12Z" fill="#2c7c80"/><path d="M3.4 8.6 L14.8 1.9 L9 14Z" fill="#48b0b4"/><text x="11" y="28.8" font-size="5.5" font-weight="bold" fill="#555" font-family="Liberation Sans">MAYA</text></svg>
<div style="position:absolute;left:43px;top:111px;width:1513px;height:39px;background:#444"></div>
<div style="position:absolute;left:41.5px;top:111px;width:1.5px;height:714px;background:#333"></div>
<div style="position:absolute;left:43px;top:111px;width:1.2px;height:714px;background:#5e5e5e"></div>
<div style="position:absolute;left:43px;top:111px;width:1512px;height:1.5px;background:#5a5a5a"></div>
<div style="position:absolute;left:1552.4px;top:111px;width:1.3px;height:714px;background:#777"></div>
<div style="position:absolute;left:1554.5px;top:111px;width:1.5px;height:714px;background:#3a3a3a"></div>
<div class="mt" style="left:50.69999999999999px;top:115px;color:#c8c8c8">视图</div>
<div class="mt" style="left:87px;top:115px;color:#c8c8c8">着色</div>
<div class="mt" style="left:123px;top:115px;color:#c8c8c8">照明</div>
<div class="mt" style="left:160.5px;top:115px;color:#c8c8c8">显示</div>
<div class="mt" style="left:197px;top:115px;color:#c8c8c8">渲染器</div>
<div class="mt" style="left:245px;top:115px;color:#c8c8c8">面板</div>
<svg style="position:absolute;left:45px;top:133px" width="6" height="14"><path d="M3 0V14" stroke="#2a2a2a"/><rect x="1.5" y="4.5" width="3" height="5" rx="1.5" fill="none" stroke="#666"/></svg>
<svg width="0" height="0" style="position:absolute"><defs><radialGradient id="bs" cx="0.35" cy="0.3" r="0.7"><stop offset="0" stop-color="#bfe0ff"/><stop offset="0.5" stop-color="#3f86d8"/><stop offset="1" stop-color="#1a3f80"/></radialGradient><radialGradient id="gs" cx="0.35" cy="0.3" r="0.7"><stop offset="0" stop-color="#fff"/><stop offset="1" stop-color="#555"/></radialGradient></defs></svg>
<svg style="position:absolute;left:54.30000000000001px;top:132px" width="16" height="16" viewBox="0 0 16 16"><circle cx="5" cy="5" r="3.6" fill="none" stroke="#bbb" stroke-width="1.6"/><circle cx="10.5" cy="5" r="3.2" fill="none" stroke="#bbb" stroke-width="1.6"/><ellipse cx="8" cy="12" rx="4" ry="2.5" fill="#111"/><circle cx="14" cy="10" r="1.2" fill="#111"/></svg>
<svg style="position:absolute;left:73.0px;top:132px" width="16" height="16" viewBox="0 0 16 16"><circle cx="5" cy="5" r="3.4" fill="none" stroke="#aaa" stroke-width="1.5"/><path d="M3 11 L8 9" stroke="#111" stroke-width="2.5"/><rect x="8.5" y="6" width="6" height="9" fill="#e4e4e4" stroke="#888" stroke-width="0.6"/><path d="M10 9H13 M10 11H13 M10 13H13" stroke="#999"/></svg>
<svg style="position:absolute;left:92.39999999999998px;top:132px" width="16" height="16" viewBox="0 0 16 16"><rect x="2" y="2.5" width="12" height="12" fill="#f2f2f2" stroke="#777" stroke-width="0.8"/><rect x="4" y="4.5" width="4" height="8" fill="none" stroke="#bbb"/><path d="M9.5 1 V13 L11 11 L12.5 13 V1Z" fill="#2a9a3a"/></svg>
<svg style="position:absolute;left:110.5px;top:132px" width="16" height="16" viewBox="0 0 16 16"><path d="M2 12 L9 14.5 L15 8 L8 5.5Z" fill="#ccc" stroke="#888" stroke-width="0.6"/><path d="M3.5 11 L8.5 13 L13 8.5 L8 6.5Z" fill="#3a9a3a"/><path d="M9 3 L15 8 L8 5.5Z" fill="#3a7ad8"/></svg>
<svg style="position:absolute;left:128.60000000000002px;top:132px" width="16" height="16" viewBox="0 0 16 16"><path d="M5 1V11 M0.5 6H9.5" stroke="#d22" stroke-width="1.8"/><path d="M7 13 L3.5 16" stroke="#a86a2a" stroke-width="2"/><circle cx="11" cy="9" r="3.8" fill="#eee" stroke="#aaa" stroke-width="0.8"/><path d="M11 7V11 M9 9H13" stroke="#d22" stroke-width="1.3"/></svg>
<svg style="position:absolute;left:148.0px;top:132px" width="16" height="16" viewBox="0 0 16 16"><path d="M3 14 L13 3" stroke="#b01818" stroke-width="4.5" stroke-linecap="round"/><path d="M3 14 L6 11" stroke="#e8d8c8" stroke-width="3"/><path d="M2.5 14.5 L3.5 13.5" stroke="#222" stroke-width="2"/></svg>
<svg style="position:absolute;left:166px;top:133px" width="6" height="14"><path d="M3 0V14" stroke="#2a2a2a"/><rect x="1.5" y="4.5" width="3" height="5" rx="1.5" fill="none" stroke="#666"/></svg>
<svg style="position:absolute;left:177.5px;top:132px" width="16" height="16" viewBox="0 0 16 16"><rect x="1" y="2" width="14" height="12" fill="#8a8a8a"/><path d="M8 4 L14 8 L8 12 L2 8Z M5 6 L11 10 M11 6 L5 10" stroke="#f4f4f4" stroke-width="1.2" fill="none"/></svg>
<svg style="position:absolute;left:196.0px;top:132px" width="16" height="16" viewBox="0 0 16 16"><rect x="1" y="2.5" width="14" height="11" fill="#f0f0f0" stroke="#666" stroke-width="0.6"/><rect x="2" y="5" width="12" height="6" fill="#222"/><rect x="3" y="6" width="3" height="4" fill="#9ac8f0"/><rect x="6.7" y="6" width="3" height="4" fill="#9ac8f0"/><rect x="10.4" y="6" width="3" height="4" fill="#9ac8f0"/></svg>
<svg style="position:absolute;left:214.3px;top:132px" width="16" height="16" viewBox="0 0 16 16"><rect x="1" y="2.5" width="14" height="11" fill="#f2f2f2" stroke="#777" stroke-width="0.6"/><circle cx="8" cy="8" r="4.8" fill="url(#bs)"/></svg>
<div style="position:absolute;left:232.60000000000002px;top:131px;width:18px;height:17px;box-sizing:border-box;border:1px solid #2c2c2c;border-radius:3px;background:#5e5e5e"></div>
<svg style="position:absolute;left:233.60000000000002px;top:132px" width="16" height="16" viewBox="0 0 16 16"><rect x="2" y="2.5" width="12" height="11" fill="#8a8a8a"/><circle cx="8" cy="8" r="4.5" fill="#bdbdbd" stroke="#eee" stroke-width="0.8"/></svg>
<svg style="position:absolute;left:251.70000000000005px;top:132px" width="16" height="16" viewBox="0 0 16 16"><rect x="1" y="2.5" width="14" height="11" fill="#e8e8e8" stroke="#777" stroke-width="0.6"/><path d="M1 2.5 L15 13.5 M15 2.5 L1 13.5 M8 2.5V13.5 M1 8H15" stroke="#555" stroke-width="0.6"/><rect x="4" y="5" width="8" height="6" fill="none" stroke="#555" stroke-width="0.6"/></svg>
<svg style="position:absolute;left:270.4px;top:132px" width="16" height="16" viewBox="0 0 16 16"><rect x="1" y="2.5" width="14" height="11" fill="#e8e8e8" stroke="#3c3" stroke-width="1.2"/><circle cx="5" cy="7" r="1.8" fill="#3a7ad0"/><circle cx="10.5" cy="7" r="1.8" fill="#3a7ad0"/><circle cx="7.5" cy="11" r="1.8" fill="#3a7ad0"/></svg>
<svg style="position:absolute;left:289.0px;top:132px" width="16" height="16" viewBox="0 0 16 16"><rect x="1" y="2.5" width="14" height="11" fill="#ececec" stroke="#3c3" stroke-width="1.2"/><path d="M4.5 5H11.5 M8 5V12 M6.5 12H9.5" stroke="#111" stroke-width="1.6"/></svg>
<svg style="position:absolute;left:308px;top:133px" width="6" height="14"><path d="M3 0V14" stroke="#2a2a2a"/><rect x="1.5" y="4.5" width="3" height="5" rx="1.5" fill="none" stroke="#666"/></svg>
<svg style="position:absolute;left:318.70000000000005px;top:132px" width="16" height="16" viewBox="0 0 16 16"><path d="M3 5.5 L8.5 3 L14 5 L14 12 L8.5 14.5 L3 12Z M3 5.5 L8.5 8 L14 5 M8.5 8V14.5" stroke="#eee" stroke-width="1" fill="none"/></svg>
<div style="position:absolute;left:335.79999999999995px;top:131px;width:18px;height:17px;box-sizing:border-box;border:1px solid #2c2c2c;border-radius:3px;background:#555"></div>
<svg style="position:absolute;left:336.79999999999995px;top:132px" width="16" height="16" viewBox="0 0 16 16"><path d="M3 5 L9 3 L14 5 L14 12 L8 14.5 L3 12Z" fill="#5f9ae0"/><path d="M3 5 L8 7 L14 5 L9 3Z" fill="#a8ccf4"/><path d="M8 7V14.5 L14 12 V5Z" fill="#3d78c0"/></svg>
<div style="position:absolute;left:355px;top:131px;width:18px;height:17px;background:#222;border-radius:2px"></div>
<svg style="position:absolute;left:356.0px;top:132px" width="16" height="16" viewBox="0 0 16 16"><path d="M3 2H1V14H3 M13 2H15V14H13" stroke="#3d3" stroke-width="1.6" fill="none"/><circle cx="8" cy="8" r="5" fill="#aaa"/><path d="M5 5h2v2h-2z M9 5h2v2h-2z M7 7h2v2h-2z M5 9h2v2h-2z M9 9h2v2h-2z" fill="#111"/></svg>
<svg style="position:absolute;left:374.79999999999995px;top:132px" width="16" height="16" viewBox="0 0 16 16"><path d="M3 5 L9 3 L14 5 L14 12 L8 14.5 L3 12Z" fill="#5f9ae0" stroke="#eee" stroke-width="1"/><path d="M3 5 L8 7 L14 5 M8 7V14.5" stroke="#eee" stroke-width="1" fill="none"/></svg>
<div style="position:absolute;left:392.4px;top:131px;width:18px;height:17px;box-sizing:border-box;border:1px solid #2c2c2c;border-radius:3px;background:#555"></div>
<svg style="position:absolute;left:393.4px;top:132px" width="16" height="16" viewBox="0 0 16 16"><circle cx="8" cy="8" r="6" fill="#eee"/><path d="M4 4h2.5v2.5h-2.5z M9 4h2.5v2.5h-2.5z M6.5 6.5h2.5v2.5h-2.5z M4 9h2.5v2.5h-2.5z M9 9h2.5v2.5h-2.5z M11.5 6.5h2v2.5h-2z M2 6.5h2v2.5h-2z" fill="#111"/></svg>
<svg style="position:absolute;left:412.0px;top:132px" width="16" height="16" viewBox="0 0 16 16"><circle cx="8" cy="8" r="6" fill="#e8e830" opacity="0.35"/><circle cx="8" cy="8" r="3.5" fill="#f0f040"/></svg>
<svg style="position:absolute;left:430.0px;top:132px" width="16" height="16" viewBox="0 0 16 16"><circle cx="8" cy="7" r="5" fill="url(#gs)"/><ellipse cx="8" cy="14" rx="5" ry="1" fill="#555"/></svg>
<svg style="position:absolute;left:449.29999999999995px;top:133px" width="6" height="14"><path d="M3 0V14" stroke="#2a2a2a"/><rect x="1.5" y="4.5" width="3" height="5" rx="1.5" fill="none" stroke="#666"/></svg>
<svg style="position:absolute;left:459.0px;top:132px" width="16" height="16" viewBox="0 0 16 16"><circle cx="8" cy="6.5" r="5" fill="url(#gs)"/><path d="M1 14 L3 11 H13 L15 14Z" fill="#ddd"/></svg>
<svg style="position:absolute;left:478.4px;top:132px" width="16" height="16" viewBox="0 0 16 16"><ellipse cx="8" cy="8" rx="6.5" ry="5" fill="#9a5a1a"/><ellipse cx="7" cy="6.5" rx="3.5" ry="2" fill="#e8a050"/></svg>
<svg style="position:absolute;left:497.70000000000005px;top:132px" width="16" height="16" viewBox="0 0 16 16"><path d="M8 2 A6 6 0 0 0 8 14Z" fill="#2a2a2a" stroke="#888" stroke-width="0.6"/><path d="M8 2 A6 6 0 0 1 8 14Z" fill="#bbb"/><path d="M8 2 V14" stroke="#222"/></svg>
<svg style="position:absolute;left:516.4px;top:132px" width="16" height="16" viewBox="0 0 16 16"><rect x="7" y="2" width="7" height="7" rx="1.5" fill="#7ab0e8"/><circle cx="6" cy="10" r="4.5" fill="#3a78c8"/></svg>
<svg style="position:absolute;left:534.3px;top:133px" width="6" height="14"><path d="M3 0V14" stroke="#2a2a2a"/><rect x="1.5" y="4.5" width="3" height="5" rx="1.5" fill="none" stroke="#666"/></svg>
<svg style="position:absolute;left:545.4px;top:132px" width="16" height="16" viewBox="0 0 16 16"><rect x="1.5" y="2.5" width="12" height="9" fill="none" stroke="#3c3" stroke-width="1.2" stroke-dasharray="2 1.5"/><path d="M9 8 L15 12 L12 12.5 L13.5 15.5 L12 16 L10.5 13 L9 14.5Z" fill="#c22"/></svg>
<svg style="position:absolute;left:563.2px;top:133px" width="6" height="14"><path d="M3 0V14" stroke="#2a2a2a"/><rect x="1.5" y="4.5" width="3" height="5" rx="1.5" fill="none" stroke="#666"/></svg>
<div style="position:absolute;left:572.7px;top:131px;width:18px;height:17px;background:#2a2a2a;border-radius:3px"></div>
<svg style="position:absolute;left:573.7px;top:132px" width="16" height="16" viewBox="0 0 16 16"><path d="M3 5.5 L8.5 3 L14 5 L14 12 L8.5 14.5 L3 12Z M3 5.5 L8.5 8 L14 5 M8.5 8V14.5" stroke="#bbb" stroke-width="1" fill="none"/></svg>
<div style="position:absolute;left:591.4px;top:131px;width:18px;height:17px;background:#2a2a2a;border-radius:3px"></div>
<svg style="position:absolute;left:592.4px;top:132px" width="16" height="16" viewBox="0 0 16 16"><rect x="2" y="5.5" width="8" height="8" fill="none" stroke="#bbb" stroke-width="1.2"/><rect x="6" y="2.5" width="8" height="8" fill="none" stroke="#bbb" stroke-width="1.2"/></svg>
<div style="position:absolute;left:610px;top:131px;width:18px;height:17px;background:#2a2a2a;border-radius:3px"></div>
<svg style="position:absolute;left:611.0px;top:132px" width="16" height="16" viewBox="0 0 16 16"><circle cx="4" cy="8" r="2.2" fill="none" stroke="#ccc" stroke-width="1.3"/><circle cx="12" cy="4" r="2.2" fill="none" stroke="#ccc" stroke-width="1.3"/><circle cx="12" cy="12" r="2.2" fill="none" stroke="#ccc" stroke-width="1.3"/><path d="M6 7 L10 5 M6 9 L10 11" stroke="#ccc" stroke-width="1.3"/></svg>
<div style="position:absolute;left:43px;top:150px;width:1510px;height:675px;overflow:hidden;background:linear-gradient(#8b9bb0 0px,#717e90 150px,#545e6c 300px,#424a57 400px,#3c4450 675px)"><svg style="position:absolute;left:0;top:0" width="1510" height="675" viewBox="313 150 1510 675">
<defs>
<radialGradient id="gb" cx="0.5" cy="0.42" r="0.62"><stop offset="0" stop-color="#a78b66"/><stop offset="0.65" stop-color="#977c58"/><stop offset="1" stop-color="#76634a"/></radialGradient>
<linearGradient id="gn" x1="0" y1="0" x2="1" y2="0.3"><stop offset="0" stop-color="#7d6c55"/><stop offset="0.5" stop-color="#857a68"/><stop offset="0.8" stop-color="#958f82"/><stop offset="1" stop-color="#a6a194"/></linearGradient>
<linearGradient id="gl" x1="0" y1="0" x2="0" y2="1"><stop offset="0" stop-color="#6f6a5c"/><stop offset="0.5" stop-color="#8a8476"/><stop offset="1" stop-color="#aca698"/></linearGradient>
<linearGradient id="gh" x1="0" y1="0" x2="1" y2="0"><stop offset="0" stop-color="#7c786e"/><stop offset="0.5" stop-color="#8e8a80"/><stop offset="1" stop-color="#a09c92"/></linearGradient>
<linearGradient id="ghl" x1="0" y1="0" x2="0.6" y2="1"><stop offset="0" stop-color="#8e7856"/><stop offset="0.45" stop-color="#857558"/><stop offset="1" stop-color="#a39a88"/></linearGradient>
</defs>
<path d="M313 545 L730 447.4 L1823.7 546.5 L1823.7 825 L313 825Z" fill="#515151"/>
<path d="M817 594.6 L791 610 L786 643 L788.6 712 L795 730 L822 730 L809 707 L804 635.5 L832 617.6Z" fill="#736b58"/>
<path d="M1119 600 L1139 630 L1175 669 L1190.6 707 L1193 728 L1172.7 722.6 L1172.7 702 L1149.6 669 L1119 635.5 L1100 600Z" fill="#857d6e"/>
<path d="M883 443 C930 438 960 437 975 432 L996 415 L1009 408 L1057 404.6 L1069 388.5 L1087 362 L1093 332 L1198 332 L1198 362 L1204 382 L1208 433 L1214 462 L1198 482.5 L1189.6 516.8 L1160 533 L1124 579 L1083 576.6 C1040 585 990 597 919 597 L891 594.6 C860 608 830 608 812 592 C796 570 792 530 803 500 C818 467 850 450 883 443Z" fill="url(#gb)"/>
<path d="M888.5 590 L891 656 L909 694 L970 756 L975.5 763.5 L962.7 773.8 L945 763.5 L919 733 L863 661 L829.6 622.7 L806.6 579 L799 528 L840 560Z" fill="url(#ghl)"/>
<path d="M1000 416 C1030 410 1055 400 1066 390 C1080 372 1090 350 1094.6 328.8 L1205.8 328.8 L1201.8 373 L1208 389 L1210 452 L1214 462 L1198 482.5 L1189.6 516.8 L1169 523 C1150 515 1120 505 1095 480 C1070 455 1040 430 1000 416Z" fill="url(#gn)"/>
<path d="M1000 416 C1040 430 1070 455 1095 480 C1110 495 1130 505 1150 512 L1100 520 C1060 500 1030 470 1000 440Z" fill="#8f7a58" opacity="0.55"/>
<path d="M1083 574 L1124 579 L1165 533 L1198 610 L1206 623 L1201 646 L1216 689 L1226 720 L1226 740.5 L1218.7 743 L1198 730 L1201 707 L1180 666 L1155 630Z" fill="url(#gl)"/>
<path d="M1089 291.4 L1143.7 283 L1220.5 279 L1230.7 285 L1232.7 301.5 L1220.5 313.7 L1194 321.7 L1180 338 L1164 352 L1133.6 358 L1103 354 L1093 332 L1089 301.5Z" fill="url(#gh)"/>
<ellipse cx="1221" cy="287" rx="9" ry="5" fill="#1a1714"/>
<ellipse cx="1140" cy="304" rx="6" ry="4" fill="#2a2420"/><ellipse cx="1140" cy="309" rx="6" ry="2.5" fill="#c8c4bc"/>
<path d="M1058.8 295.5 L1073 313.7 L1097 325.8 L1097 309.6 L1089 297.5Z" fill="#5e5c44"/>
<ellipse cx="928" cy="280" rx="13" ry="9" fill="#a29994"/><ellipse cx="1070" cy="272" rx="12" ry="12" fill="#a29994"/><ellipse cx="1092" cy="284" rx="9" ry="7" fill="#9a918c"/>
<path d="M1079 291.4 L1002 299.5 L953.7 293.4 L925.4 281.3 L885 273 L828 245" stroke="#928883" stroke-width="13.299999999999999" stroke-linecap="round" stroke-linejoin="round" fill="none"/>
<path d="M925.4 277 L862.7 234.8" stroke="#928883" stroke-width="9.5" stroke-linecap="round" stroke-linejoin="round" fill="none"/>
<path d="M889 269 L866.7 253" stroke="#928883" stroke-width="6.6499999999999995" stroke-linecap="round" stroke-linejoin="round" fill="none"/>
<path d="M929 275 L937.5 220.7 L937.5 197.4" stroke="#928883" stroke-width="11.399999999999999" stroke-linecap="round" stroke-linejoin="round" fill="none"/>
<path d="M941.5 255 L931.4 215.6" stroke="#928883" stroke-width="6.6499999999999995" stroke-linecap="round" stroke-linejoin="round" fill="none"/>
<path d="M976 289 L968 272" stroke="#928883" stroke-width="6.6499999999999995" stroke-linecap="round" stroke-linejoin="round" fill="none"/>
<path d="M1079 277 L1022 263 L959.7 236.8" stroke="#928883" stroke-width="11.399999999999999" stroke-linecap="round" stroke-linejoin="round" fill="none"/>
<path d="M1018 255 L1008 214.6" stroke="#928883" stroke-width="6.6499999999999995" stroke-linecap="round" stroke-linejoin="round" fill="none"/>
<path d="M1069 253 L1083 220.7 L1095 174" stroke="#928883" stroke-width="10.45" stroke-linecap="round" stroke-linejoin="round" fill="none"/>
<path d="M1058.8 245 L1030.5 200.4" stroke="#928883" stroke-width="6.6499999999999995" stroke-linecap="round" stroke-linejoin="round" fill="none"/>
<path d="M1077 285 L1038.6 241" stroke="#928883" stroke-width="6.6499999999999995" stroke-linecap="round" stroke-linejoin="round" fill="none"/>
<path d="M1099 289 L1123.5 277 L1143.7 247 L1156 208.5" stroke="#928883" stroke-width="10.45" stroke-linecap="round" stroke-linejoin="round" fill="none"/>
<path d="M1101 273 L1095 220.7" stroke="#928883" stroke-width="7.6" stroke-linecap="round" stroke-linejoin="round" fill="none"/>
<path d="M1095 253 L1077 232.8" stroke="#928883" stroke-width="5.699999999999999" stroke-linecap="round" stroke-linejoin="round" fill="none"/>
<path d="M1085 290 L1075 260 L1069 253" stroke="#928883" stroke-width="11.399999999999999" stroke-linecap="round" stroke-linejoin="round" fill="none"/>
<path d="M1079 291.4 L1002 299.5 L953.7 293.4 L925.4 281.3 L885 273 L828 245" stroke="#a29994" stroke-width="7.0" stroke-linecap="round" stroke-linejoin="round" fill="none" transform="translate(0,-1)"/>
<path d="M925.4 277 L862.7 234.8" stroke="#a29994" stroke-width="5.0" stroke-linecap="round" stroke-linejoin="round" fill="none" transform="translate(0,-1)"/>
<path d="M889 269 L866.7 253" stroke="#a29994" stroke-width="3.5" stroke-linecap="round" stroke-linejoin="round" fill="none" transform="translate(0,-1)"/>
<path d="M929 275 L937.5 220.7 L937.5 197.4" stroke="#a29994" stroke-width="6.0" stroke-linecap="round" stroke-linejoin="round" fill="none" transform="translate(0,-1)"/>
<path d="M941.5 255 L931.4 215.6" stroke="#a29994" stroke-width="3.5" stroke-linecap="round" stroke-linejoin="round" fill="none" transform="translate(0,-1)"/>
<path d="M976 289 L968 272" stroke="#a29994" stroke-width="3.5" stroke-linecap="round" stroke-linejoin="round" fill="none" transform="translate(0,-1)"/>
<path d="M1079 277 L1022 263 L959.7 236.8" stroke="#a29994" stroke-width="6.0" stroke-linecap="round" stroke-linejoin="round" fill="none" transform="translate(0,-1)"/>
<path d="M1018 255 L1008 214.6" stroke="#a29994" stroke-width="3.5" stroke-linecap="round" stroke-linejoin="round" fill="none" transform="translate(0,-1)"/>
<path d="M1069 253 L1083 220.7 L1095 174" stroke="#a29994" stroke-width="5.5" stroke-linecap="round" stroke-linejoin="round" fill="none" transform="translate(0,-1)"/>
<path d="M1058.8 245 L1030.5 200.4" stroke="#a29994" stroke-width="3.5" stroke-linecap="round" stroke-linejoin="round" fill="none" transform="translate(0,-1)"/>
<path d="M1077 285 L1038.6 241" stroke="#a29994" stroke-width="3.5" stroke-linecap="round" stroke-linejoin="round" fill="none" transform="translate(0,-1)"/>
<path d="M1099 289 L1123.5 277 L1143.7 247 L1156 208.5" stroke="#a29994" stroke-width="5.5" stroke-linecap="round" stroke-linejoin="round" fill="none" transform="translate(0,-1)"/>
<path d="M1101 273 L1095 220.7" stroke="#a29994" stroke-width="4.0" stroke-linecap="round" stroke-linejoin="round" fill="none" transform="translate(0,-1)"/>
<path d="M1095 253 L1077 232.8" stroke="#a29994" stroke-width="3.0" stroke-linecap="round" stroke-linejoin="round" fill="none" transform="translate(0,-1)"/>
<path d="M1085 290 L1075 260 L1069 253" stroke="#a29994" stroke-width="6.0" stroke-linecap="round" stroke-linejoin="round" fill="none" transform="translate(0,-1)"/>
<path d="M850 256 L828 245" stroke="#e6dedb" stroke-width="3" stroke-linecap="round" fill="none"/>
<path d="M878 245 L862.7 234.8" stroke="#e6dedb" stroke-width="3" stroke-linecap="round" fill="none"/>
<path d="M872 257 L866.7 253" stroke="#e6dedb" stroke-width="3" stroke-linecap="round" fill="none"/>
<path d="M937.5 215 L937.5 197.4" stroke="#e6dedb" stroke-width="3" stroke-linecap="round" fill="none"/>
<path d="M933 225 L931.4 215.6" stroke="#e6dedb" stroke-width="3" stroke-linecap="round" fill="none"/>
<path d="M975 242 L959.7 236.8" stroke="#e6dedb" stroke-width="3" stroke-linecap="round" fill="none"/>
<path d="M1012 228 L1008 214.6" stroke="#e6dedb" stroke-width="3" stroke-linecap="round" fill="none"/>
<path d="M1090 195 L1095 174" stroke="#e6dedb" stroke-width="3" stroke-linecap="round" fill="none"/>
<path d="M1040 215 L1030.5 200.4" stroke="#e6dedb" stroke-width="3" stroke-linecap="round" fill="none"/>
<path d="M1151 225 L1156 208.5" stroke="#e6dedb" stroke-width="3" stroke-linecap="round" fill="none"/>
<path d="M1096 235 L1095 220.7" stroke="#e6dedb" stroke-width="3" stroke-linecap="round" fill="none"/>
<path d="M1046 250 L1038.6 241" stroke="#e6dedb" stroke-width="3" stroke-linecap="round" fill="none"/>
<path d="M1083 238 L1077 232.8" stroke="#e6dedb" stroke-width="3" stroke-linecap="round" fill="none"/>
<path d="M788 722 L795 730 L822 730 L815 720Z" fill="#2e2a26"/>
<path d="M948 765 L962.7 773.8 L975.5 763.5 L968 757Z" fill="#2e2a26"/>
<path d="M1200 733 L1218.7 743 L1226 740.5 L1224 728Z" fill="#2e2a26"/>
<path d="M1174 718 L1193 728 L1192 715Z" fill="#2e2a26"/>
<path d="M801.5 497 L768 512.6 L767 533 L799 525Z" fill="#d8c8a8"/>
<path d="M974 418 L996 417 L1000 421 L1000 441 L976 441 L974 438Z" fill="#484848"/><path d="M992 417 L1000 421 L1000 441 L992 441Z" fill="#333"/>
<path d="M1069 590 L1085 588 L1090 593 L1090 612 L1074 612Z" fill="#474747"/><path d="M1083 588 L1090 593 L1090 612 L1083 612Z" fill="#333"/>
<path d="M930 595 L940 593 L940 606 L932 606Z" fill="#474747"/>
<path d="M1000 597 L1008 595 L1008 607 L1002 607Z" fill="#474747"/>
<line x1="1203" y1="371.7" x2="1381.5" y2="309" stroke="#1b2275" stroke-width="1.25"/>
<line x1="1165.5" y1="540.7" x2="1371" y2="441" stroke="#1b2275" stroke-width="1.25"/>
<line x1="1184" y1="575" x2="1471" y2="502" stroke="#1b2275" stroke-width="1.25"/>
<line x1="1184" y1="575" x2="1486.5" y2="530" stroke="#1b2275" stroke-width="1.25"/>
<line x1="1171.7" y1="547" x2="1537" y2="560.8" stroke="#1b2275" stroke-width="1.25"/>
<line x1="987" y1="628" x2="1090" y2="578" stroke="#1b2275" stroke-width="1.25"/>
<line x1="987" y1="628" x2="1065" y2="608" stroke="#1b2275" stroke-width="1.25"/>
<line x1="1002.6" y1="694" x2="1030.8" y2="591" stroke="#1b2275" stroke-width="1.25"/>
<line x1="937" y1="609.6" x2="980.7" y2="603" stroke="#1b2275" stroke-width="1.25"/>
<line x1="1080" y1="597" x2="1184" y2="575" stroke="#1b2275" stroke-width="1.25"/>
<path d="M337.5 800 V787" stroke-width="1.4" fill="none" stroke="#4c4"/>
<path d="M337.5 800 L326 797" stroke="#e33" stroke-width="1.4"/><path d="M337.5 800 L346 796" stroke="#33e" stroke-width="1.4"/>
<text x="334.5" y="785" font-size="9" font-weight="bold" fill="#4c4" font-family="Liberation Sans">y</text><text x="321" y="797" font-size="9" font-weight="bold" fill="#e33" font-family="Liberation Sans">x</text><text x="341.5" y="797" font-size="9" font-weight="bold" fill="#33e" font-family="Liberation Sans">z</text>
<text x="1047" y="815" font-size="10" font-weight="bold" fill="#2e7a30" font-family="Liberation Sans">persp</text>
</svg></div>
<div style="position:absolute;left:42px;top:150px;width:2px;height:676px;background:#5a5a5a"></div>
<div style="position:absolute;left:1552px;top:150px;width:2px;height:676px;background:#6a6a6a"></div>
<div style="position:absolute;left:42px;top:824px;width:1512px;height:2px;background:#6a6a6a"></div>
<div style="position:absolute;left:0px;top:826px;width:1556px;height:64px;background:#444"></div>
<div style="position:absolute;left:4px;top:829px;width:6px;height:30px;background:repeating-linear-gradient(#5a5a5a 0 1px,transparent 1px 3px)"></div>
<div style="position:absolute;left:12px;top:828px;width:1502px;height:31px;background:#262626"></div>
<div style="position:absolute;left:20px;top:842.5px;width:1px;height:13.5px;background:#c0c0c0"></div>
<div class="mt" style="left:20.0px;top:829.5px;color:#9a9a9a;font-size:11px">0</div>
<div style="position:absolute;left:69px;top:842.5px;width:1px;height:13.5px;background:#c0c0c0"></div>
<div class="mt" style="left:69.48px;top:829.5px;color:#9a9a9a;font-size:11px">20</div>
<div style="position:absolute;left:118px;top:842.5px;width:1px;height:13.5px;background:#c0c0c0"></div>
<div class="mt" style="left:118.96000000000001px;top:829.5px;color:#9a9a9a;font-size:11px">40</div>
<div style="position:absolute;left:168px;top:842.5px;width:1px;height:13.5px;background:#c0c0c0"></div>
<div class="mt" style="left:168.44px;top:829.5px;color:#9a9a9a;font-size:11px">60</div>
<div style="position:absolute;left:217px;top:842.5px;width:1px;height:13.5px;background:#c0c0c0"></div>
<div class="mt" style="left:217.92000000000002px;top:829.5px;color:#9a9a9a;font-size:11px">80</div>
<div style="position:absolute;left:267px;top:842.5px;width:1px;height:13.5px;background:#c0c0c0"></div>
<div class="mt" style="left:267.40000000000003px;top:829.5px;color:#9a9a9a;font-size:11px">100</div>
<div style="position:absolute;left:316px;top:842.5px;width:1px;height:13.5px;background:#c0c0c0"></div>
<div class="mt" style="left:316.88px;top:829.5px;color:#9a9a9a;font-size:11px">120</div>
<div style="position:absolute;left:366px;top:842.5px;width:1px;height:13.5px;background:#c0c0c0"></div>
<div class="mt" style="left:366.36px;top:829.5px;color:#9a9a9a;font-size:11px">140</div>
<div style="position:absolute;left:415px;top:842.5px;width:1px;height:13.5px;background:#c0c0c0"></div>
<div class="mt" style="left:415.84000000000003px;top:829.5px;color:#9a9a9a;font-size:11px">160</div>
<div style="position:absolute;left:465px;top:842.5px;width:1px;height:13.5px;background:#c0c0c0"></div>
<div class="mt" style="left:465.32000000000005px;top:829.5px;color:#9a9a9a;font-size:11px">180</div>
<div style="position:absolute;left:514px;top:842.5px;width:1px;height:13.5px;background:#c0c0c0"></div>
<div class="mt" style="left:514.8000000000001px;top:829.5px;color:#9a9a9a;font-size:11px">200</div>
<div style="position:absolute;left:564px;top:842.5px;width:1px;height:13.5px;background:#c0c0c0"></div>
<div class="mt" style="left:564.2800000000001px;top:829.5px;color:#9a9a9a;font-size:11px">220</div>
<div style="position:absolute;left:613px;top:842.5px;width:1px;height:13.5px;background:#c0c0c0"></div>
<div class="mt" style="left:613.76px;top:829.5px;color:#9a9a9a;font-size:11px">240</div>
<div style="position:absolute;left:663px;top:842.5px;width:1px;height:13.5px;background:#c0c0c0"></div>
<div class="mt" style="left:663.24px;top:829.5px;color:#9a9a9a;font-size:11px">260</div>
<div style="position:absolute;left:712px;top:842.5px;width:1px;height:13.5px;background:#c0c0c0"></div>
<div class="mt" style="left:712.72px;top:829.5px;color:#9a9a9a;font-size:11px">280</div>
<div style="position:absolute;left:762px;top:842.5px;width:1px;height:13.5px;background:#c0c0c0"></div>
<div class="mt" style="left:762.2px;top:829.5px;color:#9a9a9a;font-size:11px">300</div>
<div style="position:absolute;left:811px;top:842.5px;width:1px;height:13.5px;background:#c0c0c0"></div>
<div class="mt" style="left:811.6800000000001px;top:829.5px;color:#9a9a9a;font-size:11px">320</div>
<div style="position:absolute;left:861px;top:842.5px;width:1px;height:13.5px;background:#c0c0c0"></div>
<div class="mt" style="left:861.1600000000001px;top:829.5px;color:#9a9a9a;font-size:11px">340</div>
<div style="position:absolute;left:910px;top:842.5px;width:1px;height:13.5px;background:#c0c0c0"></div>
<div class="mt" style="left:910.6400000000001px;top:829.5px;color:#9a9a9a;font-size:11px">360</div>
<div style="position:absolute;left:960px;top:842.5px;width:1px;height:13.5px;background:#c0c0c0"></div>
<div class="mt" style="left:960.1200000000001px;top:829.5px;color:#9a9a9a;font-size:11px">380</div>
<div style="position:absolute;left:1009px;top:842.5px;width:1px;height:13.5px;background:#c0c0c0"></div>
<div class="mt" style="left:1009.6000000000001px;top:829.5px;color:#9a9a9a;font-size:11px">400</div>
<div style="position:absolute;left:1059px;top:842.5px;width:1px;height:13.5px;background:#c0c0c0"></div>
<div class="mt" style="left:1059.0800000000002px;top:829.5px;color:#9a9a9a;font-size:11px">420</div>
<div style="position:absolute;left:1108px;top:842.5px;width:1px;height:13.5px;background:#c0c0c0"></div>
<div class="mt" style="left:1108.5600000000002px;top:829.5px;color:#9a9a9a;font-size:11px">440</div>
<div style="position:absolute;left:1158px;top:842.5px;width:1px;height:13.5px;background:#c0c0c0"></div>
<div class="mt" style="left:1158.0400000000002px;top:829.5px;color:#9a9a9a;font-size:11px">460</div>
<div style="position:absolute;left:1207px;top:842.5px;width:1px;height:13.5px;background:#c0c0c0"></div>
<div class="mt" style="left:1207.52px;top:829.5px;color:#9a9a9a;font-size:11px">480</div>
<div style="position:absolute;left:1256px;top:842.5px;width:1px;height:13.5px;background:#c0c0c0"></div>
<div class="mt" style="left:1257.0px;top:829.5px;color:#9a9a9a;font-size:11px">500</div>
<div style="position:absolute;left:1306px;top:842.5px;width:1px;height:13.5px;background:#c0c0c0"></div>
<div class="mt" style="left:1306.48px;top:829.5px;color:#9a9a9a;font-size:11px">520</div>
<div style="position:absolute;left:1355px;top:842.5px;width:1px;height:13.5px;background:#c0c0c0"></div>
<div class="mt" style="left:1355.96px;top:829.5px;color:#9a9a9a;font-size:11px">540</div>
<div style="position:absolute;left:1405px;top:842.5px;width:1px;height:13.5px;background:#c0c0c0"></div>
<div class="mt" style="left:1405.44px;top:829.5px;color:#9a9a9a;font-size:11px">560</div>
<div style="position:absolute;left:1454px;top:842.5px;width:1px;height:13.5px;background:#c0c0c0"></div>
<div class="mt" style="left:1454.92px;top:829.5px;color:#9a9a9a;font-size:11px">580</div>
<div style="position:absolute;left:1504px;top:842.5px;width:1px;height:13.5px;background:#c0c0c0"></div>
<div class="mt" style="left:1495.9px;top:829.5px;width:10px;overflow:hidden;color:#9a9a9a;font-size:11px">60</div>
<div style="position:absolute;left:680.0580000000001px;top:830px;width:1.2px;height:26px;background:#e8e8e8"></div>
<div class="mt" style="left:679.0580000000001px;top:843px;color:#fff;font-size:11px">267</div>
<div style="position:absolute;left:1518px;top:835px;width:40px;height:17px;background:#2a2a2a;border-radius:3px"></div>
<div class="mt" style="left:1520px;top:836.5px;color:#ddd;font-size:11px">267.00</div>
<div style="position:absolute;left:0px;top:860px;width:1556px;height:3px;background:#383838"></div>
<div style="position:absolute;left:4px;top:864px;width:6px;height:22px;background:repeating-linear-gradient(#5a5a5a 0 1px,transparent 1px 3px)"></div>
<div style="position:absolute;left:13px;top:865px;width:63px;height:19px;background:#2a2a2a;border-radius:3px"></div>
<div class="mt" style="left:17px;top:867.5px;color:#ddd;font-size:11px">1.00</div>
<div style="position:absolute;left:81px;top:865px;width:62px;height:19px;background:#2a2a2a;border-radius:3px"></div>
<div class="mt" style="left:84px;top:867.5px;color:#ddd;font-size:11px">1.00</div>
<div style="position:absolute;left:146px;top:865px;width:1239px;height:20px;background:#262626"></div>
<div style="position:absolute;left:152px;top:867px;width:1228px;height:16px;background:#6a6a6a"></div>
<div style="position:absolute;left:156px;top:869px;width:9px;height:12px;box-sizing:border-box;border:1px solid #505050;border-right-color:#aaa;border-bottom-color:#aaa"></div>
<div class="mt" style="left:170px;top:867.5px;color:#ddd;font-size:11px">1</div>
<div class="mt" style="left:1343px;top:867.5px;color:#ddd;font-size:11px">600</div>
<div style="position:absolute;left:1368px;top:869px;width:9px;height:12px;box-sizing:border-box;border:1px solid #505050;border-right-color:#aaa;border-bottom-color:#aaa"></div>
<div style="position:absolute;left:1391px;top:865px;width:63px;height:19px;background:#2a2a2a;border-radius:3px"></div>
<div class="mt" style="left:1394px;top:867.5px;color:#ddd;font-size:11px">600.00</div>
<div style="position:absolute;left:1458px;top:865px;width:63px;height:19px;background:#2a2a2a;border-radius:3px"></div>
<div class="mt" style="left:1461px;top:867.5px;color:#ddd;font-size:11px">600.00</div>
<div style="position:absolute;left:1527px;top:871px;width:0;height:0;border-left:4.5px solid transparent;border-right:4.5px solid transparent;border-top:5px solid #999"></div>
<div style="position:absolute;left:1540px;top:864px;width:30px;height:22px;box-sizing:border-box;border:1px solid #555;border-radius:3px;background:#444"></div>
<div class="mt" style="left:1544px;top:867.5px;color:#ccc;font-size:11px">无</div>
<div style="position:absolute;left:0px;top:887px;width:1556px;height:3px;background:#3a3a3a"></div>
</div>

<div class="a" id="dl"></div>
<div class="a" id="dbox"></div>
<div class="a" id="dlb"></div>
<div class="a" id="red"></div>
<svg class="a" style="left:1010px;top:1005px" width="80" height="80" viewBox="0 0 80 80">
 <path d="M42 12 L42 46" stroke="#f0963a" stroke-width="6" stroke-linecap="round" fill="none"/>
 <path d="M31 32 L42 46 L53 32" stroke="#f0963a" stroke-width="6.5" stroke-linecap="round" stroke-linejoin="round" fill="none"/>
 <path d="M15.5 43 L15.5 65.5 L66.5 65.5 L66.5 43" stroke="#f0963a" stroke-width="6.5" fill="none" stroke-linejoin="miter"/>
</svg>
<div class="a" id="dltxt">下载(790B)</div>

<div class="a hd">您可能喜欢的资源</div>
<div class="a nm" style="left:274px;top:1344px">1、</div><div class="a li" style="left:320px;top:1340px">maya一个反恐警察长官模型</div>
<div class="a nm" style="left:1053px;top:1344px">2、</div><div class="a li" style="left:1099px;top:1340px">maya一个游戏主角 性感辣妹模型</div>
<div class="a nm" style="left:274px;top:1408px">3、</div><div class="a li" style="left:320px;top:1404px">3dsMax游戏风格的摩托艇模型</div>
<div class="a nm" style="left:1053px;top:1408px">4、</div><div class="a li" style="left:1099px;top:1404px">3dsMax一只漂亮的蝴蝶模型</div>
<div class="a nm" style="left:274px;top:1472px">5、</div><div class="a li" style="left:320px;top:1468px">3dsMax爆炸头型 黑人女警察模型</div>
<div class="a nm" style="left:1053px;top:1472px">6、</div><div class="a li" style="left:1099px;top:1468px">maya一只带贴图带绑定的大苍蝇模型</div>
<div class="a nm" style="left:274px;top:1536px">7、</div><div class="a li" style="left:320px;top:1532px">low poly低多边形风格小场景，室内场景，家具模型</div>
<div class="a nm" style="left:1053px;top:1536px">8、</div><div class="a li" style="left:1099px;top:1532px">maya英雄联盟 暗黑元首模型</div>
<div class="a nm" style="left:274px;top:1600px">9、</div><div class="a li" style="left:320px;top:1596px">maya英雄联盟 狼人模型</div>
<div class="a nm" style="left:1049px;top:1600px">10、</div><div class="a li" style="left:1099px;top:1596px">maya影视级别休闲皮鞋 高帮鞋模型</div>

<div class="a" id="side">
 <svg style="position:absolute;left:43px;top:15px" width="44" height="66" viewBox="0 0 44 66">
  <rect x="2.5" y="2.5" width="37" height="61" rx="4.5" stroke="#17a088" stroke-width="3" fill="none"/>
  <path d="M2.5 47.5 H39.5" stroke="#17a088" stroke-width="3"/>
  <circle cx="21" cy="55" r="3" fill="#17a088"/>
 </svg>
 <div class="stx" style="top:95px">下载APP</div>
 <div class="sdiv" style="top:136px"></div>
 <svg style="position:absolute;left:0;top:0" width="128" height="274" viewBox="0 0 128 274">
  <path d="M42.5 193.5 C 31 187, 34 163, 55 161.5 C 68 161, 76 168, 77 177" stroke="#17a088" stroke-width="3" fill="none"/>
  <path d="M42.8 193.8 L40.2 202.6 L49 197.6" stroke="#17a088" stroke-width="3" fill="none" stroke-linejoin="round"/>
  <path d="M49 197.6 C 53 199, 57 199.5, 60 199" stroke="#17a088" stroke-width="3" fill="none"/>
  <circle cx="48" cy="173.3" r="3" fill="#17a088"/><circle cx="63" cy="173.3" r="3" fill="#17a088"/>
  <ellipse cx="76.1" cy="194.75" rx="17.1" ry="15.4" stroke="#17a088" stroke-width="3" fill="#fff"/>
  <path d="M84 208.5 L88.4 213.1 L86.5 205" stroke="#17a088" stroke-width="3" fill="#fff" stroke-linejoin="round"/>
  <circle cx="70.4" cy="189" r="2.5" fill="#17a088"/><circle cx="81.8" cy="189" r="2.5" fill="#17a088"/>
 </svg>
 <div class="stx" style="top:222px">公众号</div>
 <div class="sdiv" style="top:274px"></div>
 <svg style="position:absolute;left:0;top:274px" width="128" height="138" viewBox="0 274 128 138">
  <path d="M41 318 C 41 300, 52 296.5, 64 296.5 C 76 296.5, 87 300, 87 318" stroke="#5db5a2" stroke-width="3" fill="none"/>
  <path d="M45 322 C 45 306, 53 302, 64 302 C 75 302, 83 306, 83 322" stroke="#7cc4b4" stroke-width="1.5" fill="none"/>
  <path d="M42 311 C 36 312, 35 322, 42 324Z" fill="#5db5a2" stroke="#5db5a2" stroke-width="2"/>
  <path d="M86 311 C 92 312, 93 322, 86 324Z" fill="#5db5a2" stroke="#5db5a2" stroke-width="2"/>
  <path d="M45 322 C 41 330, 42 340, 47 344 C 44 349, 47 352, 54 351 C 58 352, 62 352, 64 350 C 66 352, 70 352, 74 351 C 81 352, 84 349, 81 344 C 86 340, 87 330, 83 322" stroke="#7cc4b4" stroke-width="2" fill="none"/>
 </svg>
 <div class="stx" style="top:359px">在线客服</div>
 <div class="sdiv" style="top:412px"></div>
 <svg style="position:absolute;left:0;top:412px" width="128" height="90" viewBox="0 412 128 90">
  <path d="M39 470 L64 447 L89 470" stroke="#17a088" stroke-width="3.2" fill="none" stroke-linecap="round" stroke-linejoin="round"/>
 </svg>
</div>
</body></html>
